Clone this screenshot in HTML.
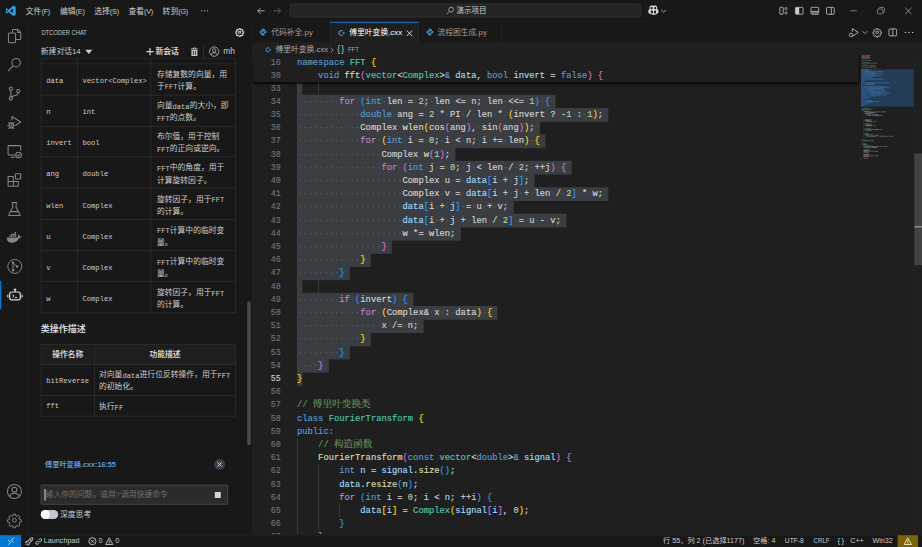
<!DOCTYPE html>
<html lang="zh-CN">
<head>
<meta charset="utf-8">
<title>傅里叶变换.cxx - 演示项目 - Visual Studio Code</title>
<style>
html,body{margin:0;padding:0;background:#181818;overflow:hidden;}
body{width:922px;height:547px;position:relative;}
#app{position:absolute;left:0;top:0;width:1537px;height:912px;transform:scale(0.6);transform-origin:0 0;background:#181818;overflow:hidden;
 font-family:"Liberation Sans","Noto Sans CJK SC",sans-serif;font-size:13px;color:#cccccc;}
#app *{box-sizing:border-box;}
.abs{position:absolute;}
.p{font-size:12px;letter-spacing:-.3px;}
svg{display:block;overflow:visible;}
/* title bar */
#title{position:absolute;left:0;top:0;width:1537px;height:36px;background:#181818;border-bottom:1px solid #2b2b2b;}
.menu{position:absolute;top:1px;height:36px;line-height:36px;font-size:13px;color:#cccccc;white-space:nowrap;}
#cmd{position:absolute;left:483px;top:6px;width:586px;height:23px;border:1px solid #3c3c3c;border-radius:6px;background:#252526;}
/* activity bar */
#act{position:absolute;left:0;top:36px;width:48px;height:855px;background:#181818;border-right:1px solid #2b2b2b;}
.ai{position:absolute;left:10px;width:28px;height:28px;margin-top:-2px;}
/* sidebar */
#side{position:absolute;left:48px;top:36px;width:373px;height:855px;background:#181818;border-right:1px solid #2b2b2b;overflow:hidden;}
.mono{font-family:"Liberation Mono","Noto Sans CJK SC",monospace;}
table.t{position:absolute;border-collapse:collapse;font-family:"Liberation Mono","Noto Sans CJK SC",monospace;font-size:13px;color:#cccccc;table-layout:fixed;}
.m{font-size:11.9px;position:relative;top:1.1px;}
table.t td.l{padding-top:3.5px;}
#t1 td{padding-top:6.5px;}
#t1 td.l{padding-top:4.6px;}
table.t td.w{padding-left:9.5px;}
#t2 td.w{padding-right:2px;}
#t2 td{padding-top:4.5px;padding-left:7px;}
#t2 td.l{padding-top:.7px;padding-left:8px;}
#t2 tr:last-child td.l{padding-top:0;padding-bottom:.9px;}
#t2 th{background:#1e1e1e;}
table.t td,table.t th{border:1px solid #363636;padding:7px 8px 0 8px;vertical-align:middle;line-height:19.5px;text-align:left;font-weight:normal;overflow:hidden;white-space:nowrap;}
table.t td.w{white-space:normal;}
table.t th{font-weight:bold;text-align:center;color:#d0d0d0;padding:2.4px 8px 0 8px;}
/* editor */
#ed{position:absolute;left:421px;top:36px;width:1116px;height:855px;background:#1f1f1f;overflow:hidden;}
#tabs{position:absolute;left:0;top:0;width:1116px;height:36px;background:#181818;border-bottom:1px solid #2b2b2b;}
.tab{position:absolute;top:0;height:36px;border-right:1px solid #2b2b2b;font-size:13px;line-height:35px;color:#9d9d9d;white-space:nowrap;}
.tab.on{background:#1f1f1f;border-top:2px solid #0078d4;color:#ffffff;height:36px;line-height:33px;}
#bc{position:absolute;left:0;top:36px;width:1116px;height:21px;font-size:13px;line-height:21px;color:#a9a9a9;white-space:nowrap;}
#code{position:absolute;left:0;top:0;width:1116px;height:855px;font-family:"Liberation Mono","Noto Serif CJK SC",monospace;font-size:14.667px;}
.ln{-webkit-text-stroke:.2px;position:absolute;left:0;width:47px;transform:scaleX(.95);transform-origin:100% 50%;text-align:right;height:22px;line-height:22px;color:#6e7681;white-space:pre;}
.ln.act{color:#cccccc;}
.cl{position:absolute;left:74px;height:22px;line-height:22px;white-space:pre;color:#d4d4d4;-webkit-text-stroke:.25px;}
.cl i{font-style:normal;color:#5e6165;-webkit-text-stroke:0;}
.cl b{font-weight:normal;font-size:16px;}
.sel{position:absolute;left:74px;height:22.7px;background:#3a3d41;}
.g{position:absolute;width:1px;background:#484848;z-index:2;}
#sticky{position:absolute;left:0;top:57px;width:1010px;height:44px;background:#1f1f1f;box-shadow:0 3px 4px 0 #000000;}
/* status */
#status{position:absolute;left:0;top:891px;width:1537px;height:22px;background:#181818;border-top:1px solid #2b2b2b;font-size:12px;line-height:19px;color:#cccccc;white-space:nowrap;}
.si{position:absolute;top:0;height:21px;}
</style>
</head>
<body>
<div id="app">

<!-- ================= TITLE BAR ================= -->
<div id="title">
  <svg class="abs" style="left:9px;top:9px" width="18" height="18" viewBox="0 0 100 100"><path fill="#23a9f2" d="M71 3 31 40 13 26 5 30v40l8 4 18-14 40 37 24-10V13zM14 62V38l12 12zm57 10L40 50l31-22z"/></svg>
  <div class="menu" style="left:43px">文件<span class="p">(F)</span></div>
  <div class="menu" style="left:100px">编辑<span class="p">(E)</span></div>
  <div class="menu" style="left:157px">选择<span class="p">(S)</span></div>
  <div class="menu" style="left:214px">查看<span class="p">(V)</span></div>
  <div class="menu" style="left:271px">转到<span class="p">(G)</span></div>
  <svg class="abs" style="left:334px;top:16px" width="14" height="4" viewBox="0 0 14 4"><g fill="#cccccc"><circle cx="2" cy="2" r="1.100"/><circle cx="7" cy="2" r="1.100"/><circle cx="12" cy="2" r="1.100"/></g></svg>
  <!-- nav arrows -->
  <svg class="abs" style="left:427px;top:10px" width="16" height="16" viewBox="0 0 16 16"><path fill="none" stroke="#cccccc" stroke-width="1.3" d="M7.5 3 2.5 8l5 5M2.5 8H14"/></svg>
  <svg class="abs" style="left:454px;top:10px" width="16" height="16" viewBox="0 0 16 16"><path fill="none" stroke="#6b6b6b" stroke-width="1.3" d="M8.5 3l5 5-5 5M13.5 8H2"/></svg>
  <div id="cmd">
    <svg class="abs" style="left:259px;top:3px" width="15" height="15" viewBox="0 0 16 16"><circle cx="9.5" cy="6.5" r="4.3" fill="none" stroke="#cccccc" stroke-width="1.2"/><path d="M6.4 9.6 2 14" stroke="#cccccc" stroke-width="1.2"/></svg>
    <div class="abs" style="left:277px;top:0;line-height:21px;font-size:12.5px;color:#cccccc;white-space:nowrap">演示项目</div>
  </div>
  <!-- copilot -->
  <svg class="abs" style="left:1080px;top:9.400px" width="18" height="16.500" viewBox="0 0 18 16.500"><path fill="#d8d8d8" d="M9 .9C7.500-.2 3-.1 2.600 3.200c-.2 1.300 0 2.300-.4 3.100C1 7.500.3 8.600.3 10.300.3 13.500 5 16 9 16s8.700-2.500 8.700-5.700c0-1.700-.7-2.800-1.900-4-.4-.8-.2-1.800-.4-3.100C15-.1 10.500-.2 9 .9z"/><g fill="#181818"><rect x="4.100" y="2.500" width="3.700" height="3.900" rx="1.700"/><rect x="10.200" y="2.500" width="3.700" height="3.900" rx="1.700"/><rect x="4.700" y="8.500" width="3.300" height="4.900" rx="1.200"/><rect x="10" y="8.500" width="3.300" height="4.900" rx="1.200"/></g></svg>
  <svg class="abs" style="left:1101px;top:14.500px" width="10" height="7" viewBox="0 0 10 7"><path d="M.8 1.200 5 5.200l4.200-4" fill="none" stroke="#cccccc" stroke-width="1.300"/></svg>
  <!-- layout controls -->
  <svg class="abs" style="left:1298px;top:10px" width="16" height="16" viewBox="0 0 16 16"><g fill="none" stroke="#cccccc"><rect x="1.700" y="2.200" width="5.600" height="11.600" rx="1" stroke-width="1.300"/><rect x="10.300" y="2.700" width="3.400" height="3.400" rx=".8" stroke-width="1.100"/><rect x="10.300" y="9.900" width="3.400" height="3.400" rx=".8" stroke-width="1.100"/></g></svg>
  <svg class="abs" style="left:1324px;top:10px" width="16" height="16" viewBox="0 0 16 16"><rect x="1.600" y="2.200" width="12.800" height="11.600" rx="1.500" fill="none" stroke="#cccccc" stroke-width="1.300"/><rect x="2" y="2.600" width="6" height="10.800" fill="#cccccc"/></svg>
  <svg class="abs" style="left:1350px;top:10px" width="16" height="16" viewBox="0 0 16 16"><rect x="1.600" y="2.200" width="12.800" height="11.600" rx="1.500" fill="none" stroke="#cccccc" stroke-width="1.300"/><rect x="2.200" y="9" width="11.600" height="4.200" fill="#6f6f6f"/><path d="M2 9h12" stroke="#cccccc" stroke-width="1.200"/></svg>
  <svg class="abs" style="left:1376px;top:10px" width="16" height="16" viewBox="0 0 16 16"><rect x="1.600" y="2.200" width="12.800" height="11.600" rx="1.500" fill="none" stroke="#cccccc" stroke-width="1.300"/><path d="M9.500 2.200v11.600" stroke="#cccccc" stroke-width="1.300"/></svg>
  <!-- window controls -->
  <svg class="abs" style="left:1417px;top:12px" width="12" height="12" viewBox="0 0 12 12"><path d="M0 6h11" stroke="#9a9a9a" stroke-width="1.200"/></svg>
  <svg class="abs" style="left:1462px;top:12px" width="13" height="12" viewBox="0 0 13 12"><g fill="none" stroke="#9a9a9a" stroke-width="1.200"><rect x=".6" y="3" width="8.800" height="8" rx="1.500"/><path d="M3 3V2.100c0-.8.700-1.500 1.500-1.500h6c.8 0 1.500.7 1.500 1.500v5.400c0 .8-.7 1.500-1.500 1.500H9.600"/></g></svg>
  <svg class="abs" style="left:1508px;top:12px" width="12" height="12" viewBox="0 0 12 12"><path d="M.8.800l10.400 10.400M11.200.800 .8 11.200" stroke="#c4c4c4" stroke-width="1.100"/></svg>
</div>

<!-- ================= ACTIVITY BAR ================= -->
<div id="act">
  <!-- files -->
  <svg class="ai" style="top:12px" viewBox="0 0 24 24"><g fill="none" stroke="#868686" stroke-width="1.500" stroke-linejoin="round"><path d="M9.200 7.300V4c0-.8.600-1.400 1.400-1.400h6.200L21 6.800v8.800c0 .8-.6 1.400-1.400 1.400h-5.400"/><path d="M16.600 2.800v4.200h4.200"/><rect x="3.500" y="7.600" width="10.200" height="14" rx="1.600"/></g></svg>
  <!-- search -->
  <svg class="ai" style="top:60px" viewBox="0 0 24 24"><g fill="none" stroke="#868686" stroke-width="1.500"><circle cx="14.500" cy="9" r="6"/><path d="M10.300 13.300 3 21"/></g></svg>
  <!-- scm -->
  <svg class="ai" style="top:108px" viewBox="0 0 24 24"><g fill="none" stroke="#868686" stroke-width="1.500"><circle cx="7" cy="5" r="2.300"/><circle cx="7" cy="19" r="2.300"/><circle cx="17.500" cy="8.500" r="2.300"/><path d="M7 7.300v9.400M17.500 10.800c0 3.500-4 4.200-7 4.700-2 .4-3.500 1-3.500 2"/></g></svg>
  <!-- debug -->
  <svg class="ai" style="top:156px" viewBox="0 0 24 24"><g fill="none" stroke="#868686" stroke-width="1.500" stroke-linejoin="round"><path d="M8.500 9V3.500L21 11.500 13.500 16.500"/><ellipse cx="7.500" cy="16.500" rx="3" ry="3.800"/><path d="M5 13.500 3 12M10 13.500l2-1.500M4.500 16.500H2M13 16.500h-2.500M5 19.500l-2 1.500M10 19.500l2 1.500M7.500 12.700V20"/></g></svg>
  <!-- remote -->
  <svg class="ai" style="top:204px" viewBox="0 0 24 24"><g fill="none" stroke="#868686" stroke-width="1.500"><path d="M13 17.500H4.200c-.7 0-1.200-.5-1.200-1.200V5.200C3 4.500 3.500 4 4.200 4h15.600c.7 0 1.200.5 1.200 1.200V11M7 20.500h6"/><circle cx="18" cy="17.500" r="4"/><path d="M16.300 17.500l1.200 1.300 2.200-2.500"/></g></svg>
  <!-- extensions -->
  <svg class="ai" style="top:252px" viewBox="0 0 24 24"><g fill="none" stroke="#868686" stroke-width="1.500" stroke-linejoin="round"><path d="M3 7h7.500v14H3zM3 14h14.500v7H3M10.500 14h7v7"/><rect x="13.500" y="3" width="7.500" height="7.500" rx=".8"/></g></svg>
  <!-- flask -->
  <svg class="ai" style="top:300px" viewBox="0 0 24 24"><g fill="none" stroke="#868686" stroke-width="1.500" stroke-linejoin="round"><path d="M8 3h8M9.500 3v7L4 20c-.4.800.1 1.500.9 1.500h14.200c.8 0 1.300-.7.900-1.500L14.500 10V3M6.500 16h11"/></g></svg>
  <!-- docker -->
  <svg class="ai" style="top:348px" viewBox="0 0 24 24"><path fill="#868686" d="M22.800 10.700c-.6-.4-1.900-.5-2.900-.3-.1-1-.7-1.900-1.600-2.600l-.4-.3-.3.400c-.6.900-.8 2.400-.1 3.400-.3.200-.9.400-1.700.4H1.400c-.3 1.700 0 4 1.300 5.500 1.200 1.400 3 2.100 5.400 2.100 5.100 0 8.900-2.400 10.700-6.700.7 0 2.200 0 3-1.500l.2-.4zM4.500 8.800h2.200v2H4.500zm2.600 0h2.200v2H7.100zm2.600 0h2.200v2H9.700zm2.600 0h2.200v2h-2.200zM7.100 6.400h2.200v2H7.100zm2.600 0h2.200v2H9.700zm2.600 0h2.200v2h-2.200zm0-2.400h2.200v2h-2.200z"/></svg>
  <!-- git graph -->
  <svg class="ai" style="top:396px" viewBox="0 0 24 24"><g fill="none" stroke="#868686" stroke-width="1.400"><circle cx="12.500" cy="12" r="10"/><path d="M10 7v10.500M10 7l5.500 5"/></g><g fill="#868686"><circle cx="10" cy="6.800" r="1.800"/><circle cx="10" cy="17.600" r="1.800"/><circle cx="15.800" cy="12.300" r="1.800"/></g></svg>
  <!-- active indicator -->
  <div class="abs" style="left:0;top:432px;width:2px;height:48px;background:#0078d4"></div>
  <!-- robot -->
  <svg class="ai" style="top:444px" viewBox="0 0 24 24"><g fill="none" stroke="#d7d7d7" stroke-width="1.700" stroke-linejoin="round"><rect x="5.200" y="7.400" width="15.300" height="11.200" rx="3"/><path d="M12.900 7.400V5M2.600 11.400v4M23 11.400v4"/><path d="M9.200 11.300l2.300 1.900-2.300 1.900M12.700 15.300h3.200" stroke-width="1.400"/></g><circle cx="12.900" cy="4" r="1.700" fill="#d7d7d7"/></svg>
  <!-- account -->
  <svg class="ai" style="top:771px" viewBox="0 0 24 24"><g fill="none" stroke="#868686" stroke-width="1.500"><circle cx="12" cy="12" r="10"/><circle cx="12" cy="9.500" r="3.500"/><path d="M5.200 19.200c.8-3.200 3.500-4.700 6.800-4.700s6 1.500 6.800 4.700"/></g></svg>
  <!-- gear -->
  <svg class="ai" style="top:819px" viewBox="-1 -1 26 26"><g fill="none" stroke="#868686" stroke-width="1.500" stroke-linejoin="round"><circle cx="12" cy="12" r="3"/><path d="M10.300 2.500h3.400l.5 2.700 1.800.8 2.300-1.600 2.400 2.400-1.600 2.300.8 1.800 2.700.5v3.400l-2.700.5-.8 1.800 1.600 2.300-2.400 2.400-2.300-1.600-1.800.8-.5 2.700h-3.400l-.5-2.700-1.800-.8-2.300 1.600-2.400-2.400 1.600-2.300-.8-1.800-2.700-.5v-3.400l2.700-.5.8-1.800-1.600-2.300 2.400-2.400 2.300 1.600 1.800-.8z"/></g></svg>

</div>

<!-- ================= SIDEBAR ================= -->
<div id="side"><div class="abs" style="left:0;top:-1px;width:372px;height:856px;">
  <div class="abs" style="left:20.500px;top:10px;font-size:11px;line-height:18px;color:#c4c4c4;white-space:nowrap;transform:scaleX(.875);transform-origin:0 0;">DTCODER CHAT</div>
  <!-- gear -->
  <svg class="abs" style="left:343.500px;top:10.500px" width="15" height="15" viewBox="0 0 24 24"><g fill="none" stroke="#cccccc" stroke-width="2.800" stroke-linejoin="round"><circle cx="12" cy="12" r="3"/><path d="M10.300 2.500h3.400l.5 2.700 1.800.8 2.300-1.600 2.400 2.400-1.600 2.300.8 1.800 2.700.5v3.400l-2.700.5-.8 1.800 1.600 2.300-2.400 2.400-2.300-1.600-1.800.8-.5 2.700h-3.400l-.5-2.700-1.800-.8-2.300 1.600-2.400-2.400 1.600-2.300-.8-1.800-2.700-.5v-3.400l2.700-.5.8-1.800-1.600-2.300 2.400-2.400 2.300 1.600 1.800-.8z"/></g></svg>
  <!-- chat header -->
  <div class="abs" id="dlg" style="left:20px;top:41px;font-size:13px;line-height:20px;color:#cccccc;white-space:nowrap;">新建对话14</div>
  <svg class="abs" style="left:94px;top:48px" width="12" height="7" viewBox="0 0 12 7"><path d="M0 0h12L6 7z" fill="#cccccc"/></svg>
  <svg class="abs" style="left:196px;top:45px" width="12" height="12" viewBox="0 0 12 12"><path d="M6 0v12M0 6h12" stroke="#d4d4d4" stroke-width="2"/></svg>
  <div class="abs" id="newc" style="left:211px;top:41px;font-size:13px;line-height:20px;color:#d4d4d4;font-weight:bold;white-space:nowrap;">新会话</div>
  <!-- trash -->
  <svg class="abs" style="left:269px;top:44px" width="14" height="15" viewBox="0 0 14 15"><path d="M1 2.700h12M5 2.500V1h4v1.500" fill="none" stroke="#cccccc" stroke-width="1.400"/><path d="M2 4.200h10v9.300c0 .6-.4 1-1 1H3c-.6 0-1-.4-1-1z" fill="#c4c4c4"/><path d="M5.300 6v6.500M8.700 6v6.500" stroke="#181818" stroke-width="1.300"/></svg>
  <div class="abs" style="left:291px;top:42px;width:1px;height:19px;background:#3c3c3c"></div>
  <!-- user -->
  <svg class="abs" style="left:300px;top:42px" width="18" height="18" viewBox="0 0 24 24"><g fill="none" stroke="#cccccc" stroke-width="1.600"><circle cx="12" cy="12" r="10.500"/><circle cx="12" cy="9.500" r="3.800"/><path d="M5 19.600c.8-3.400 3.600-5 7-5s6.200 1.600 7 5"/></g></svg>
  <div class="abs" id="mh" style="left:324px;top:40px;font-size:14px;line-height:20px;color:#cccccc;white-space:nowrap;">mh</div>
  <div class="abs" style="left:20px;top:62px;width:324px;height:1px;background:#2e2e2e"></div>

  <div class="abs" id="scr" style="left:0;top:63px;width:372px;height:650px;overflow:hidden;">
  <!-- table 1 -->
  <table class="t" id="t1" style="left:20px;top:-43.950px;width:324px;">
    <colgroup><col style="width:60.500px"><col style="width:122.500px"><col style="width:141px"></colgroup>
    <tr style="height:51.850px"><td></td><td></td><td></td></tr>
    <tr style="height:51.850px"><td class="l"><span class="m">data</span></td><td class="l"><span class="m">vector&lt;Complex&gt;</span></td><td class="w">存储复数的向量，用于<span class="m">FFT</span>计算。</td></tr>
    <tr style="height:51.850px"><td class="l"><span class="m">n</span></td><td class="l"><span class="m">int</span></td><td class="w">向量<span class="m">data</span>的大小，即<span class="m">FFT</span>的点数。</td></tr>
    <tr style="height:51.850px"><td class="l"><span class="m">invert</span></td><td class="l"><span class="m">bool</span></td><td class="w">布尔值，用于控制<span class="m">FFT</span>的正向或逆向。</td></tr>
    <tr style="height:51.850px"><td class="l"><span class="m">ang</span></td><td class="l"><span class="m">double</span></td><td class="w"><span class="m">FFT</span>中的角度，用于计算旋转因子。</td></tr>
    <tr style="height:51.850px"><td class="l"><span class="m">wlen</span></td><td class="l"><span class="m">Complex</span></td><td class="w">旋转因子，用于<span class="m">FFT</span>的计算。</td></tr>
    <tr style="height:51.850px"><td class="l"><span class="m">u</span></td><td class="l"><span class="m">Complex</span></td><td class="w"><span class="m">FFT</span>计算中的临时变量。</td></tr>
    <tr style="height:51.850px"><td class="l"><span class="m">v</span></td><td class="l"><span class="m">Complex</span></td><td class="w"><span class="m">FFT</span>计算中的临时变量。</td></tr>
    <tr style="height:51.850px"><td class="l"><span class="m">w</span></td><td class="l"><span class="m">Complex</span></td><td class="w">旋转因子，用于<span class="m">FFT</span>的计算。</td></tr>
  </table>
  

  <div class="abs" id="h2" style="left:20px;top:439px;font-size:15px;line-height:24px;font-weight:bold;color:#d4d4d4;white-space:nowrap;">类操作描述</div>

  <table class="t" id="t2" style="left:20px;top:476px;width:324px;">
    <colgroup><col style="width:89px"><col style="width:235px"></colgroup>
    <tr style="height:33px"><th>操作名称</th><th>功能描述</th></tr>
    <tr style="height:51.800px"><td class="l"><span class="m">bitReverse</span></td><td class="w">对向量<span class="m">data</span>进行位反转操作，用于<span class="m">FFT</span>的初始化。</td></tr>
    <tr style="height:34.500px"><td class="l"><span class="m">fft</span></td><td>执行<span class="m">FF</span></td></tr>
  </table>

  </div>
  <!-- scrollbar thumb -->
  <div class="abs" style="left:364px;top:467px;width:6px;height:240px;border-radius:3px;background:#4a4a4a"></div>

  <!-- context link -->
  <div class="abs" id="lnk" style="left:27px;top:729px;font-size:12px;line-height:20px;font-weight:bold;color:#5a9bd8;white-space:nowrap;">傅里叶变换.cxx:16:55</div>
  <svg class="abs" style="left:309px;top:730px" width="18" height="18" viewBox="0 0 18 18"><circle cx="9" cy="9" r="9" fill="#3b3f4a"/><path d="M5.500 5.500l7 7M12.500 5.500l-7 7" stroke="#e6e6e6" stroke-width="1.500"/></svg>

  <!-- input -->
  <div class="abs" style="left:20px;top:773px;width:312px;height:33px;border:1px solid #5c5c5c;background:#2b2b2b;border-radius:1px;">
    <div class="abs" style="left:5px;top:6px;width:2px;height:19px;background:#c8c8c8"></div>
    <div class="abs" id="ph" style="left:7px;top:5px;font-size:13px;line-height:20px;color:#6f6f6f;white-space:nowrap;">输入你的问题，或用'/'调用快捷命令</div>
    <div class="abs" style="left:289px;top:11px;width:9.5px;height:9.5px;background:#d4d4d4;border-radius:1px"></div>
  </div>
  <!-- toggle -->
  <div class="abs" style="left:20px;top:815px;width:29px;height:15px;border-radius:8px;background:#c4c6cc;">
    <div class="abs" style="left:0;top:0;width:15px;height:15px;border-radius:8px;background:#ffffff"></div>
  </div>
  <div class="abs" id="deep" style="left:52px;top:812px;font-size:13px;line-height:20px;color:#cccccc;white-space:nowrap;">深度思考</div>

</div></div>

<!-- ================= EDITOR ================= -->
<div id="ed">
  <div id="code">
<div class="g" style="left:74px;top:100px;height:484px"></div>
<div class="g" style="left:109.2px;top:100px;height:22px"></div>
<div class="g" style="left:109.2px;top:430px;height:22px"></div>
<div class="g" style="left:74px;top:694px;height:176px"></div>
<div class="g" style="left:109.2px;top:738px;height:110px"></div>
<div class="g" style="left:144.4px;top:804px;height:22px"></div>
<div class="ln" style="top:100px">33</div>
<div class="sel" style="top:100px;width:8.8px"></div>
<div class="cl" style="top:100px"></div>
<div class="ln" style="top:122px">34</div>
<div class="sel" style="top:122px;width:431.2px"></div>
<div class="cl" style="top:122px"><i>·</i><i>·</i><i>·</i><i>·</i><i>·</i><i>·</i><i>·</i><i>·</i><span style="color:#c586c0">for</span><i>·</i><span style="color:#179fff">(</span><span style="color:#569cd6">int</span><i>·</i><span style="color:#d4d4d4">len</span><i>·</i><span style="color:#d4d4d4">=</span><i>·</i><span style="color:#b5cea8">2</span><span style="color:#d4d4d4">;</span><i>·</i><span style="color:#d4d4d4">len</span><i>·</i><span style="color:#d4d4d4">&lt;=</span><i>·</i><span style="color:#d4d4d4">n;</span><i>·</i><span style="color:#d4d4d4">len</span><i>·</i><span style="color:#d4d4d4">&lt;&lt;=</span><i>·</i><span style="color:#b5cea8">1</span><span style="color:#179fff">)</span><i>·</i><span style="color:#179fff">{</span></div>
<div class="ln" style="top:144px">35</div>
<div class="sel" style="top:144px;width:519.2px"></div>
<div class="cl" style="top:144px"><i>·</i><i>·</i><i>·</i><i>·</i><i>·</i><i>·</i><i>·</i><i>·</i><i>·</i><i>·</i><i>·</i><i>·</i><span style="color:#569cd6">double</span><i>·</i><span style="color:#d4d4d4">ang</span><i>·</i><span style="color:#d4d4d4">=</span><i>·</i><span style="color:#b5cea8">2</span><i>·</i><span style="color:#d4d4d4">*</span><i>·</i><span style="color:#d4d4d4">PI</span><i>·</i><span style="color:#d4d4d4">/</span><i>·</i><span style="color:#d4d4d4">len</span><i>·</i><span style="color:#d4d4d4">*</span><i>·</i><span style="color:#ffd700">(</span><span style="color:#d4d4d4">invert</span><i>·</i><span style="color:#d4d4d4">?</span><i>·</i><span style="color:#d4d4d4">-</span><span style="color:#b5cea8">1</span><i>·</i><span style="color:#d4d4d4">:</span><i>·</i><span style="color:#b5cea8">1</span><span style="color:#ffd700">)</span><span style="color:#d4d4d4">;</span></div>
<div class="ln" style="top:166px">36</div>
<div class="sel" style="top:166px;width:404.8px"></div>
<div class="cl" style="top:166px"><i>·</i><i>·</i><i>·</i><i>·</i><i>·</i><i>·</i><i>·</i><i>·</i><i>·</i><i>·</i><i>·</i><i>·</i><span style="color:#d4d4d4">Complex</span><i>·</i><span style="color:#dcdcaa">wlen</span><span style="color:#ffd700">(</span><span style="color:#dcdcaa">cos</span><span style="color:#da70d6">(</span><span style="color:#d4d4d4">ang</span><span style="color:#da70d6">)</span><span style="color:#d4d4d4">,</span><i>·</i><span style="color:#dcdcaa">sin</span><span style="color:#da70d6">(</span><span style="color:#d4d4d4">ang</span><span style="color:#da70d6">)</span><span style="color:#ffd700">)</span><span style="color:#d4d4d4">;</span></div>
<div class="ln" style="top:188px">37</div>
<div class="sel" style="top:188px;width:413.6px"></div>
<div class="cl" style="top:188px"><i>·</i><i>·</i><i>·</i><i>·</i><i>·</i><i>·</i><i>·</i><i>·</i><i>·</i><i>·</i><i>·</i><i>·</i><span style="color:#c586c0">for</span><i>·</i><span style="color:#ffd700">(</span><span style="color:#569cd6">int</span><i>·</i><span style="color:#d4d4d4">i</span><i>·</i><span style="color:#d4d4d4">=</span><i>·</i><span style="color:#b5cea8">0</span><span style="color:#d4d4d4">;</span><i>·</i><span style="color:#d4d4d4">i</span><i>·</i><span style="color:#d4d4d4">&lt;</span><i>·</i><span style="color:#d4d4d4">n;</span><i>·</i><span style="color:#d4d4d4">i</span><i>·</i><span style="color:#d4d4d4">+=</span><i>·</i><span style="color:#d4d4d4">len</span><span style="color:#ffd700">)</span><i>·</i><span style="color:#ffd700">{</span></div>
<div class="ln" style="top:210px">38</div>
<div class="sel" style="top:210px;width:264px"></div>
<div class="cl" style="top:210px"><i>·</i><i>·</i><i>·</i><i>·</i><i>·</i><i>·</i><i>·</i><i>·</i><i>·</i><i>·</i><i>·</i><i>·</i><i>·</i><i>·</i><i>·</i><i>·</i><span style="color:#d4d4d4">Complex</span><i>·</i><span style="color:#dcdcaa">w</span><span style="color:#da70d6">(</span><span style="color:#b5cea8">1</span><span style="color:#da70d6">)</span><span style="color:#d4d4d4">;</span></div>
<div class="ln" style="top:232px">39</div>
<div class="sel" style="top:232px;width:457.6px"></div>
<div class="cl" style="top:232px"><i>·</i><i>·</i><i>·</i><i>·</i><i>·</i><i>·</i><i>·</i><i>·</i><i>·</i><i>·</i><i>·</i><i>·</i><i>·</i><i>·</i><i>·</i><i>·</i><span style="color:#c586c0">for</span><i>·</i><span style="color:#da70d6">(</span><span style="color:#569cd6">int</span><i>·</i><span style="color:#d4d4d4">j</span><i>·</i><span style="color:#d4d4d4">=</span><i>·</i><span style="color:#b5cea8">0</span><span style="color:#d4d4d4">;</span><i>·</i><span style="color:#d4d4d4">j</span><i>·</i><span style="color:#d4d4d4">&lt;</span><i>·</i><span style="color:#d4d4d4">len</span><i>·</i><span style="color:#d4d4d4">/</span><i>·</i><span style="color:#b5cea8">2</span><span style="color:#d4d4d4">;</span><i>·</i><span style="color:#d4d4d4">++j</span><span style="color:#da70d6">)</span><i>·</i><span style="color:#da70d6">{</span></div>
<div class="ln" style="top:254px">40</div>
<div class="sel" style="top:254px;width:396px"></div>
<div class="cl" style="top:254px"><i>·</i><i>·</i><i>·</i><i>·</i><i>·</i><i>·</i><i>·</i><i>·</i><i>·</i><i>·</i><i>·</i><i>·</i><i>·</i><i>·</i><i>·</i><i>·</i><i>·</i><i>·</i><i>·</i><i>·</i><span style="color:#d4d4d4">Complex</span><i>·</i><span style="color:#d4d4d4">u</span><i>·</i><span style="color:#d4d4d4">=</span><i>·</i><span style="color:#9cdcfe">data</span><span style="color:#179fff">[</span><span style="color:#d4d4d4">i</span><i>·</i><span style="color:#d4d4d4">+</span><i>·</i><span style="color:#d4d4d4">j</span><span style="color:#179fff">]</span><span style="color:#d4d4d4">;</span></div>
<div class="ln" style="top:276px">41</div>
<div class="sel" style="top:276px;width:519.2px"></div>
<div class="cl" style="top:276px"><i>·</i><i>·</i><i>·</i><i>·</i><i>·</i><i>·</i><i>·</i><i>·</i><i>·</i><i>·</i><i>·</i><i>·</i><i>·</i><i>·</i><i>·</i><i>·</i><i>·</i><i>·</i><i>·</i><i>·</i><span style="color:#d4d4d4">Complex</span><i>·</i><span style="color:#d4d4d4">v</span><i>·</i><span style="color:#d4d4d4">=</span><i>·</i><span style="color:#9cdcfe">data</span><span style="color:#179fff">[</span><span style="color:#d4d4d4">i</span><i>·</i><span style="color:#d4d4d4">+</span><i>·</i><span style="color:#d4d4d4">j</span><i>·</i><span style="color:#d4d4d4">+</span><i>·</i><span style="color:#d4d4d4">len</span><i>·</i><span style="color:#d4d4d4">/</span><i>·</i><span style="color:#b5cea8">2</span><span style="color:#179fff">]</span><i>·</i><span style="color:#d4d4d4">*</span><i>·</i><span style="color:#d4d4d4">w;</span></div>
<div class="ln" style="top:298px">42</div>
<div class="sel" style="top:298px;width:360.8px"></div>
<div class="cl" style="top:298px"><i>·</i><i>·</i><i>·</i><i>·</i><i>·</i><i>·</i><i>·</i><i>·</i><i>·</i><i>·</i><i>·</i><i>·</i><i>·</i><i>·</i><i>·</i><i>·</i><i>·</i><i>·</i><i>·</i><i>·</i><span style="color:#9cdcfe">data</span><span style="color:#179fff">[</span><span style="color:#d4d4d4">i</span><i>·</i><span style="color:#d4d4d4">+</span><i>·</i><span style="color:#d4d4d4">j</span><span style="color:#179fff">]</span><i>·</i><span style="color:#d4d4d4">=</span><i>·</i><span style="color:#d4d4d4">u</span><i>·</i><span style="color:#d4d4d4">+</span><i>·</i><span style="color:#d4d4d4">v;</span></div>
<div class="ln" style="top:320px">43</div>
<div class="sel" style="top:320px;width:448.8px"></div>
<div class="cl" style="top:320px"><i>·</i><i>·</i><i>·</i><i>·</i><i>·</i><i>·</i><i>·</i><i>·</i><i>·</i><i>·</i><i>·</i><i>·</i><i>·</i><i>·</i><i>·</i><i>·</i><i>·</i><i>·</i><i>·</i><i>·</i><span style="color:#9cdcfe">data</span><span style="color:#179fff">[</span><span style="color:#d4d4d4">i</span><i>·</i><span style="color:#d4d4d4">+</span><i>·</i><span style="color:#d4d4d4">j</span><i>·</i><span style="color:#d4d4d4">+</span><i>·</i><span style="color:#d4d4d4">len</span><i>·</i><span style="color:#d4d4d4">/</span><i>·</i><span style="color:#b5cea8">2</span><span style="color:#179fff">]</span><i>·</i><span style="color:#d4d4d4">=</span><i>·</i><span style="color:#d4d4d4">u</span><i>·</i><span style="color:#d4d4d4">-</span><i>·</i><span style="color:#d4d4d4">v;</span></div>
<div class="ln" style="top:342px">44</div>
<div class="sel" style="top:342px;width:272.8px"></div>
<div class="cl" style="top:342px"><i>·</i><i>·</i><i>·</i><i>·</i><i>·</i><i>·</i><i>·</i><i>·</i><i>·</i><i>·</i><i>·</i><i>·</i><i>·</i><i>·</i><i>·</i><i>·</i><i>·</i><i>·</i><i>·</i><i>·</i><span style="color:#d4d4d4">w</span><i>·</i><span style="color:#d4d4d4">*=</span><i>·</i><span style="color:#d4d4d4">wlen;</span></div>
<div class="ln" style="top:364px">45</div>
<div class="sel" style="top:364px;width:158.4px"></div>
<div class="cl" style="top:364px"><i>·</i><i>·</i><i>·</i><i>·</i><i>·</i><i>·</i><i>·</i><i>·</i><i>·</i><i>·</i><i>·</i><i>·</i><i>·</i><i>·</i><i>·</i><i>·</i><span style="color:#da70d6">}</span></div>
<div class="ln" style="top:386px">46</div>
<div class="sel" style="top:386px;width:123.2px"></div>
<div class="cl" style="top:386px"><i>·</i><i>·</i><i>·</i><i>·</i><i>·</i><i>·</i><i>·</i><i>·</i><i>·</i><i>·</i><i>·</i><i>·</i><span style="color:#ffd700">}</span></div>
<div class="ln" style="top:408px">47</div>
<div class="sel" style="top:408px;width:88px"></div>
<div class="cl" style="top:408px"><i>·</i><i>·</i><i>·</i><i>·</i><i>·</i><i>·</i><i>·</i><i>·</i><span style="color:#179fff">}</span></div>
<div class="ln" style="top:430px">48</div>
<div class="sel" style="top:430px;width:8.8px"></div>
<div class="cl" style="top:430px"></div>
<div class="ln" style="top:452px">49</div>
<div class="sel" style="top:452px;width:193.6px"></div>
<div class="cl" style="top:452px"><i>·</i><i>·</i><i>·</i><i>·</i><i>·</i><i>·</i><i>·</i><i>·</i><span style="color:#c586c0">if</span><i>·</i><span style="color:#179fff">(</span><span style="color:#d4d4d4">invert</span><span style="color:#179fff">)</span><i>·</i><span style="color:#179fff">{</span></div>
<div class="ln" style="top:474px">50</div>
<div class="sel" style="top:474px;width:334.4px"></div>
<div class="cl" style="top:474px"><i>·</i><i>·</i><i>·</i><i>·</i><i>·</i><i>·</i><i>·</i><i>·</i><i>·</i><i>·</i><i>·</i><i>·</i><span style="color:#c586c0">for</span><i>·</i><span style="color:#ffd700">(</span><span style="color:#d4d4d4">Complex&amp;</span><i>·</i><span style="color:#d4d4d4">x</span><i>·</i><span style="color:#d4d4d4">:</span><i>·</i><span style="color:#d4d4d4">data</span><span style="color:#ffd700">)</span><i>·</i><span style="color:#ffd700">{</span></div>
<div class="ln" style="top:496px">51</div>
<div class="sel" style="top:496px;width:211.2px"></div>
<div class="cl" style="top:496px"><i>·</i><i>·</i><i>·</i><i>·</i><i>·</i><i>·</i><i>·</i><i>·</i><i>·</i><i>·</i><i>·</i><i>·</i><i>·</i><i>·</i><i>·</i><i>·</i><span style="color:#d4d4d4">x</span><i>·</i><span style="color:#d4d4d4">/=</span><i>·</i><span style="color:#d4d4d4">n;</span></div>
<div class="ln" style="top:518px">52</div>
<div class="sel" style="top:518px;width:123.2px"></div>
<div class="cl" style="top:518px"><i>·</i><i>·</i><i>·</i><i>·</i><i>·</i><i>·</i><i>·</i><i>·</i><i>·</i><i>·</i><i>·</i><i>·</i><span style="color:#ffd700">}</span></div>
<div class="ln" style="top:540px">53</div>
<div class="sel" style="top:540px;width:88px"></div>
<div class="cl" style="top:540px"><i>·</i><i>·</i><i>·</i><i>·</i><i>·</i><i>·</i><i>·</i><i>·</i><span style="color:#179fff">}</span></div>
<div class="ln" style="top:562px">54</div>
<div class="sel" style="top:562px;width:52.8px"></div>
<div class="cl" style="top:562px"><i>·</i><i>·</i><i>·</i><i>·</i><span style="color:#da70d6">}</span></div>
<div class="ln act" style="top:584px">55</div>
<div class="sel" style="top:584px;width:8.8px"></div>
<div class="cl" style="top:584px"><span style="color:#ffd700">}</span></div>
<div class="ln" style="top:606px">56</div>
<div class="cl" style="top:606px"></div>
<div class="ln" style="top:628px">57</div>
<div class="cl" style="top:628px"><span style="color:#6a9955">// <b>傅里叶变换类</b></span></div>
<div class="ln" style="top:650px">58</div>
<div class="cl" style="top:650px"><span style="color:#569cd6">class</span><span style="color:#d4d4d4"> </span><span style="color:#4ec9b0">FourierTransform</span><span style="color:#d4d4d4"> </span><span style="color:#ffd700">{</span></div>
<div class="ln" style="top:672px">59</div>
<div class="cl" style="top:672px"><span style="color:#569cd6">public:</span></div>
<div class="ln" style="top:694px">60</div>
<div class="cl" style="top:694px"><span style="color:#d4d4d4">    </span><span style="color:#6a9955">// <b>构造函数</b></span></div>
<div class="ln" style="top:716px">61</div>
<div class="cl" style="top:716px"><span style="color:#d4d4d4">    </span><span style="color:#dcdcaa">FourierTransform</span><span style="color:#da70d6">(</span><span style="color:#569cd6">const</span><span style="color:#d4d4d4"> </span><span style="color:#4ec9b0">vector</span><span style="color:#d4d4d4">&lt;</span><span style="color:#569cd6">double</span><span style="color:#d4d4d4">&gt;</span><span style="color:#569cd6">&amp;</span><span style="color:#d4d4d4"> </span><span style="color:#9cdcfe">signal</span><span style="color:#da70d6">)</span><span style="color:#d4d4d4"> </span><span style="color:#da70d6">{</span></div>
<div class="ln" style="top:738px">62</div>
<div class="cl" style="top:738px"><span style="color:#d4d4d4">        </span><span style="color:#569cd6">int</span><span style="color:#d4d4d4"> </span><span style="color:#9cdcfe">n</span><span style="color:#d4d4d4"> = </span><span style="color:#9cdcfe">signal</span><span style="color:#d4d4d4">.</span><span style="color:#dcdcaa">size</span><span style="color:#179fff">(</span><span style="color:#179fff">)</span><span style="color:#d4d4d4">;</span></div>
<div class="ln" style="top:760px">63</div>
<div class="cl" style="top:760px"><span style="color:#d4d4d4">        </span><span style="color:#9cdcfe">data</span><span style="color:#d4d4d4">.</span><span style="color:#dcdcaa">resize</span><span style="color:#179fff">(</span><span style="color:#9cdcfe">n</span><span style="color:#179fff">)</span><span style="color:#d4d4d4">;</span></div>
<div class="ln" style="top:782px">64</div>
<div class="cl" style="top:782px"><span style="color:#d4d4d4">        </span><span style="color:#c586c0">for</span><span style="color:#d4d4d4"> </span><span style="color:#179fff">(</span><span style="color:#569cd6">int</span><span style="color:#d4d4d4"> </span><span style="color:#9cdcfe">i</span><span style="color:#d4d4d4"> = </span><span style="color:#b5cea8">0</span><span style="color:#d4d4d4">; </span><span style="color:#9cdcfe">i</span><span style="color:#d4d4d4"> &lt; </span><span style="color:#9cdcfe">n</span><span style="color:#d4d4d4">; ++</span><span style="color:#9cdcfe">i</span><span style="color:#179fff">)</span><span style="color:#d4d4d4"> </span><span style="color:#179fff">{</span></div>
<div class="ln" style="top:804px">65</div>
<div class="cl" style="top:804px"><span style="color:#d4d4d4">            </span><span style="color:#9cdcfe">data</span><span style="color:#ffd700">[</span><span style="color:#9cdcfe">i</span><span style="color:#ffd700">]</span><span style="color:#d4d4d4"> = </span><span style="color:#4ec9b0">Complex</span><span style="color:#ffd700">(</span><span style="color:#9cdcfe">signal</span><span style="color:#da70d6">[</span><span style="color:#9cdcfe">i</span><span style="color:#da70d6">]</span><span style="color:#d4d4d4">, </span><span style="color:#b5cea8">0</span><span style="color:#ffd700">)</span><span style="color:#d4d4d4">;</span></div>
<div class="ln" style="top:826px">66</div>
<div class="cl" style="top:826px"><span style="color:#d4d4d4">        </span><span style="color:#179fff">}</span></div>
<div class="ln" style="top:848px">67</div>
<div class="cl" style="top:848px"><span style="color:#d4d4d4">    </span><span style="color:#da70d6">}</span></div>
  </div>
  <div id="sticky"><div style="position:absolute;left:0;top:-57px;width:1116px;height:200px;font-family:'Liberation Mono','Noto Serif CJK SC',monospace;font-size:14.667px;">
<div class="ln" style="top:57px">16</div>
<div class="cl" style="top:57px"><span style="color:#569cd6">namespace</span><span style="color:#d4d4d4"> </span><span style="color:#4ec9b0">FFT</span><span style="color:#d4d4d4"> </span><span style="color:#ffd700">{</span></div>
<div class="ln" style="top:79px">30</div>
<div class="cl" style="top:79px"><span style="color:#d4d4d4">    </span><span style="color:#569cd6">void</span><span style="color:#d4d4d4"> </span><span style="color:#dcdcaa">fft</span><span style="color:#da70d6">(</span><span style="color:#4ec9b0">vector</span><span style="color:#d4d4d4">&lt;</span><span style="color:#4ec9b0">Complex</span><span style="color:#d4d4d4">&gt;</span><span style="color:#569cd6">&amp;</span><span style="color:#d4d4d4"> </span><span style="color:#9cdcfe">data</span><span style="color:#d4d4d4">, </span><span style="color:#569cd6">bool</span><span style="color:#d4d4d4"> </span><span style="color:#9cdcfe">invert</span><span style="color:#d4d4d4"> = </span><span style="color:#569cd6">false</span><span style="color:#da70d6">)</span><span style="color:#d4d4d4"> </span><span style="color:#da70d6">{</span></div>
  </div></div>
<svg class="abs" style="left:1014px;top:56.4px" width="89" height="800" viewBox="0 0 89 800" shape-rendering="auto">
<rect x="0" y="23.4" width="88" height="62.4" fill="#243c58"/>
<rect x="0" y="23.40" width="13.8" height="1.61" fill="#2b5785"/>
<rect x="0" y="24.96" width="11.4" height="1.61" fill="#2b5785"/>
<rect x="0" y="26.52" width="37.0" height="1.61" fill="#2b5785"/>
<rect x="0" y="28.08" width="24.2" height="1.61" fill="#2b5785"/>
<rect x="0" y="29.64" width="37.0" height="1.61" fill="#2b5785"/>
<rect x="0" y="31.20" width="25.0" height="1.61" fill="#2b5785"/>
<rect x="0" y="32.76" width="33.8" height="1.61" fill="#2b5785"/>
<rect x="0" y="34.32" width="21.8" height="1.61" fill="#2b5785"/>
<rect x="0" y="35.88" width="12.2" height="1.61" fill="#2b5785"/>
<rect x="0" y="37.44" width="18.6" height="1.61" fill="#2b5785"/>
<rect x="0" y="39.00" width="38.6" height="1.61" fill="#2b5785"/>
<rect x="0" y="40.56" width="9.0" height="1.61" fill="#2b5785"/>
<rect x="0" y="42.12" width="5.8" height="1.61" fill="#2b5785"/>
<rect x="0" y="43.68" width="1.8" height="1.61" fill="#2b5785"/>
<rect x="0" y="45.24" width="48.2" height="1.61" fill="#2b5785"/>
<rect x="0" y="46.80" width="24.2" height="1.61" fill="#2b5785"/>
<rect x="0" y="48.36" width="21.8" height="1.61" fill="#2b5785"/>
<rect x="0" y="49.92" width="1.8" height="1.61" fill="#2b5785"/>
<rect x="0" y="51.48" width="40.2" height="1.61" fill="#2b5785"/>
<rect x="0" y="53.04" width="48.2" height="1.61" fill="#2b5785"/>
<rect x="0" y="54.60" width="37.8" height="1.61" fill="#2b5785"/>
<rect x="0" y="56.16" width="38.6" height="1.61" fill="#2b5785"/>
<rect x="0" y="57.72" width="25.0" height="1.61" fill="#2b5785"/>
<rect x="0" y="59.28" width="42.6" height="1.61" fill="#2b5785"/>
<rect x="0" y="60.84" width="37.0" height="1.61" fill="#2b5785"/>
<rect x="0" y="62.40" width="48.2" height="1.61" fill="#2b5785"/>
<rect x="0" y="63.96" width="33.8" height="1.61" fill="#2b5785"/>
<rect x="0" y="65.52" width="41.8" height="1.61" fill="#2b5785"/>
<rect x="0" y="67.08" width="25.8" height="1.61" fill="#2b5785"/>
<rect x="0" y="68.64" width="15.4" height="1.61" fill="#2b5785"/>
<rect x="0" y="70.20" width="12.2" height="1.61" fill="#2b5785"/>
<rect x="0" y="71.76" width="9.0" height="1.61" fill="#2b5785"/>
<rect x="0" y="73.32" width="1.8" height="1.61" fill="#2b5785"/>
<rect x="0" y="74.88" width="18.6" height="1.61" fill="#2b5785"/>
<rect x="0" y="76.44" width="31.4" height="1.61" fill="#2b5785"/>
<rect x="0" y="78.00" width="20.2" height="1.61" fill="#2b5785"/>
<rect x="0" y="79.56" width="12.2" height="1.61" fill="#2b5785"/>
<rect x="0" y="81.12" width="9.0" height="1.61" fill="#2b5785"/>
<rect x="0" y="82.68" width="5.8" height="1.61" fill="#2b5785"/>
<rect x="0" y="84.24" width="1.8" height="1.61" fill="#2b5785"/>
<rect x="1.0" y="0.2" width="6.4" height="1.1" fill="#855e82"/>
<rect x="8.2" y="0.2" width="8.0" height="1.1" fill="#8b6556"/>
<rect x="1.0" y="1.8" width="6.4" height="1.1" fill="#855e82"/>
<rect x="8.2" y="1.8" width="6.4" height="1.1" fill="#8b6556"/>
<rect x="1.0" y="3.4" width="6.4" height="1.1" fill="#855e82"/>
<rect x="8.2" y="3.4" width="7.2" height="1.1" fill="#8b6556"/>
<rect x="1.0" y="4.9" width="6.4" height="1.1" fill="#855e82"/>
<rect x="8.2" y="4.9" width="5.6" height="1.1" fill="#8b6556"/>
<rect x="1.0" y="8.1" width="4.0" height="1.1" fill="#416c90"/>
<rect x="5.8" y="8.1" width="7.2" height="1.1" fill="#416c90"/>
<rect x="13.8" y="8.1" width="3.2" height="1.1" fill="#8f8f8f"/>
<rect x="1.0" y="11.2" width="1.6" height="1.1" fill="#4d6a40"/>
<rect x="3.4" y="11.2" width="9.6" height="1.1" fill="#4d6a40"/>
<rect x="1.0" y="12.7" width="5.6" height="1.1" fill="#416c90"/>
<rect x="7.4" y="12.7" width="5.6" height="1.1" fill="#3c8878"/>
<rect x="13.0" y="12.7" width="0.8" height="1.1" fill="#8f8f8f"/>
<rect x="13.8" y="12.7" width="4.8" height="1.1" fill="#416c90"/>
<rect x="18.6" y="12.7" width="0.8" height="1.1" fill="#8f8f8f"/>
<rect x="20.2" y="12.7" width="5.6" height="1.1" fill="#3c8878"/>
<rect x="25.8" y="12.7" width="0.8" height="1.1" fill="#8f8f8f"/>
<rect x="1.0" y="15.9" width="1.6" height="1.1" fill="#4d6a40"/>
<rect x="3.4" y="15.9" width="6.4" height="1.1" fill="#4d6a40"/>
<rect x="7.4" y="15.9" width="1.6" height="1.1" fill="#4d6a40"/>
<rect x="1.0" y="17.4" width="4.0" height="1.1" fill="#416c90"/>
<rect x="5.8" y="17.4" width="4.8" height="1.1" fill="#416c90"/>
<rect x="11.4" y="17.4" width="1.6" height="1.1" fill="#8f8f8f"/>
<rect x="13.8" y="17.4" width="0.8" height="1.1" fill="#8f8f8f"/>
<rect x="15.4" y="17.4" width="3.2" height="1.1" fill="#949475"/>
<rect x="18.6" y="17.4" width="1.6" height="1.1" fill="#8f8f8f"/>
<rect x="20.2" y="17.4" width="2.4" height="1.1" fill="#7c8b73"/>
<rect x="22.6" y="17.4" width="1.6" height="1.1" fill="#8f8f8f"/>
<rect x="1.0" y="20.5" width="1.6" height="1.1" fill="#4d6a40"/>
<rect x="3.4" y="20.5" width="11.2" height="1.1" fill="#4d6a40"/>
<rect x="14.6" y="20.5" width="4.0" height="1.1" fill="#4d6a40"/>
<rect x="19.4" y="20.5" width="6.4" height="1.1" fill="#4d6a40"/>
<rect x="1.0" y="23.7" width="7.2" height="1.1" fill="#305f8e"/>
<rect x="9.0" y="23.7" width="2.4" height="1.1" fill="#2f648a"/>
<rect x="12.2" y="23.7" width="0.8" height="1.1" fill="#446675"/>
<rect x="4.2" y="25.2" width="1.6" height="1.1" fill="#325e7f"/>
<rect x="6.6" y="25.2" width="8.0" height="1.1" fill="#325e7f"/>
<rect x="4.2" y="26.8" width="3.2" height="1.1" fill="#305f8e"/>
<rect x="8.2" y="26.8" width="8.0" height="1.1" fill="#406689"/>
<rect x="16.2" y="26.8" width="0.8" height="1.1" fill="#3f668e"/>
<rect x="17.0" y="26.8" width="4.8" height="1.1" fill="#2f648a"/>
<rect x="21.8" y="26.8" width="0.8" height="1.1" fill="#3f668e"/>
<rect x="22.6" y="26.8" width="5.6" height="1.1" fill="#2f648a"/>
<rect x="28.2" y="26.8" width="1.6" height="1.1" fill="#3f668e"/>
<rect x="30.6" y="26.8" width="4.0" height="1.1" fill="#3f668e"/>
<rect x="35.4" y="26.8" width="0.8" height="1.1" fill="#3f668e"/>
<rect x="7.4" y="28.3" width="2.4" height="1.1" fill="#305f8e"/>
<rect x="10.6" y="28.3" width="0.8" height="1.1" fill="#3f668e"/>
<rect x="12.2" y="28.3" width="0.8" height="1.1" fill="#3f668e"/>
<rect x="13.8" y="28.3" width="4.0" height="1.1" fill="#3f668e"/>
<rect x="17.8" y="28.3" width="3.2" height="1.1" fill="#406689"/>
<rect x="21.0" y="28.3" width="2.4" height="1.1" fill="#3f668e"/>
<rect x="7.4" y="29.9" width="2.4" height="1.1" fill="#3d5c8c"/>
<rect x="10.6" y="29.9" width="0.8" height="1.1" fill="#3f668e"/>
<rect x="11.4" y="29.9" width="2.4" height="1.1" fill="#305f8e"/>
<rect x="14.6" y="29.9" width="0.8" height="1.1" fill="#3f668e"/>
<rect x="16.2" y="29.9" width="0.8" height="1.1" fill="#3f668e"/>
<rect x="17.8" y="29.9" width="1.6" height="1.1" fill="#3f668e"/>
<rect x="20.2" y="29.9" width="0.8" height="1.1" fill="#3f668e"/>
<rect x="21.8" y="29.9" width="0.8" height="1.1" fill="#3f668e"/>
<rect x="23.4" y="29.9" width="1.6" height="1.1" fill="#3f668e"/>
<rect x="25.8" y="29.9" width="0.8" height="1.1" fill="#3f668e"/>
<rect x="27.4" y="29.9" width="0.8" height="1.1" fill="#3f668e"/>
<rect x="29.0" y="29.9" width="1.6" height="1.1" fill="#3f668e"/>
<rect x="31.4" y="29.9" width="3.2" height="1.1" fill="#3f668e"/>
<rect x="35.4" y="29.9" width="0.8" height="1.1" fill="#3f668e"/>
<rect x="10.6" y="31.5" width="2.4" height="1.1" fill="#305f8e"/>
<rect x="13.8" y="31.5" width="2.4" height="1.1" fill="#3f668e"/>
<rect x="17.0" y="31.5" width="0.8" height="1.1" fill="#3f668e"/>
<rect x="18.6" y="31.5" width="0.8" height="1.1" fill="#3f668e"/>
<rect x="20.2" y="31.5" width="1.6" height="1.1" fill="#3f668e"/>
<rect x="22.6" y="31.5" width="1.6" height="1.1" fill="#3f668e"/>
<rect x="10.6" y="33.0" width="2.4" height="1.1" fill="#3d5c8c"/>
<rect x="13.8" y="33.0" width="1.6" height="1.1" fill="#3f668e"/>
<rect x="16.2" y="33.0" width="0.8" height="1.1" fill="#3f668e"/>
<rect x="17.8" y="33.0" width="0.8" height="1.1" fill="#3f668e"/>
<rect x="19.4" y="33.0" width="3.2" height="1.1" fill="#3f668e"/>
<rect x="23.4" y="33.0" width="2.4" height="1.1" fill="#3f668e"/>
<rect x="26.6" y="33.0" width="2.4" height="1.1" fill="#3f668e"/>
<rect x="29.8" y="33.0" width="1.6" height="1.1" fill="#3f668e"/>
<rect x="32.2" y="33.0" width="0.8" height="1.1" fill="#3f668e"/>
<rect x="13.8" y="34.6" width="0.8" height="1.1" fill="#3f668e"/>
<rect x="15.4" y="34.6" width="1.6" height="1.1" fill="#3f668e"/>
<rect x="17.8" y="34.6" width="3.2" height="1.1" fill="#3f668e"/>
<rect x="10.6" y="36.1" width="0.8" height="1.1" fill="#3f668e"/>
<rect x="10.6" y="37.7" width="0.8" height="1.1" fill="#3f668e"/>
<rect x="12.2" y="37.7" width="1.6" height="1.1" fill="#3f668e"/>
<rect x="14.6" y="37.7" width="3.2" height="1.1" fill="#3f668e"/>
<rect x="10.6" y="39.2" width="1.6" height="1.1" fill="#3d5c8c"/>
<rect x="13.0" y="39.2" width="1.6" height="1.1" fill="#3f668e"/>
<rect x="15.4" y="39.2" width="0.8" height="1.1" fill="#3f668e"/>
<rect x="17.0" y="39.2" width="1.6" height="1.1" fill="#3f668e"/>
<rect x="19.4" y="39.2" width="3.2" height="1.1" fill="#406689"/>
<rect x="22.6" y="39.2" width="7.2" height="1.1" fill="#3f668e"/>
<rect x="30.6" y="39.2" width="7.2" height="1.1" fill="#3f668e"/>
<rect x="7.4" y="40.8" width="0.8" height="1.1" fill="#3f668e"/>
<rect x="4.2" y="42.4" width="0.8" height="1.1" fill="#3f668e"/>
<rect x="4.2" y="45.5" width="3.2" height="1.1" fill="#305f8e"/>
<rect x="8.2" y="45.5" width="2.4" height="1.1" fill="#406689"/>
<rect x="10.6" y="45.5" width="0.8" height="1.1" fill="#405a8e"/>
<rect x="11.4" y="45.5" width="4.8" height="1.1" fill="#2f648a"/>
<rect x="16.2" y="45.5" width="0.8" height="1.1" fill="#3f668e"/>
<rect x="17.0" y="45.5" width="5.6" height="1.1" fill="#2f648a"/>
<rect x="22.6" y="45.5" width="0.8" height="1.1" fill="#3f668e"/>
<rect x="23.4" y="45.5" width="0.8" height="1.1" fill="#305f8e"/>
<rect x="25.0" y="45.5" width="3.2" height="1.1" fill="#386693"/>
<rect x="28.2" y="45.5" width="0.8" height="1.1" fill="#3f668e"/>
<rect x="29.8" y="45.5" width="3.2" height="1.1" fill="#305f8e"/>
<rect x="33.8" y="45.5" width="4.8" height="1.1" fill="#386693"/>
<rect x="39.4" y="45.5" width="0.8" height="1.1" fill="#3f668e"/>
<rect x="41.0" y="45.5" width="4.0" height="1.1" fill="#305f8e"/>
<rect x="45.0" y="45.5" width="0.8" height="1.1" fill="#405a8e"/>
<rect x="46.6" y="45.5" width="0.8" height="1.1" fill="#405a8e"/>
<rect x="7.4" y="47.1" width="2.4" height="1.1" fill="#305f8e"/>
<rect x="10.6" y="47.1" width="0.8" height="1.1" fill="#3f668e"/>
<rect x="12.2" y="47.1" width="0.8" height="1.1" fill="#3f668e"/>
<rect x="13.8" y="47.1" width="4.0" height="1.1" fill="#3f668e"/>
<rect x="17.8" y="47.1" width="3.2" height="1.1" fill="#406689"/>
<rect x="21.0" y="47.1" width="2.4" height="1.1" fill="#3f668e"/>
<rect x="7.4" y="48.6" width="8.0" height="1.1" fill="#406689"/>
<rect x="15.4" y="48.6" width="5.6" height="1.1" fill="#3f668e"/>
<rect x="7.4" y="51.7" width="2.4" height="1.1" fill="#3d5c8c"/>
<rect x="10.6" y="51.7" width="0.8" height="1.1" fill="#285f93"/>
<rect x="11.4" y="51.7" width="2.4" height="1.1" fill="#305f8e"/>
<rect x="14.6" y="51.7" width="2.4" height="1.1" fill="#3f668e"/>
<rect x="17.8" y="51.7" width="0.8" height="1.1" fill="#3f668e"/>
<rect x="19.4" y="51.7" width="0.8" height="1.1" fill="#3b6589"/>
<rect x="20.2" y="51.7" width="0.8" height="1.1" fill="#3f668e"/>
<rect x="21.8" y="51.7" width="2.4" height="1.1" fill="#3f668e"/>
<rect x="25.0" y="51.7" width="1.6" height="1.1" fill="#3f668e"/>
<rect x="27.4" y="51.7" width="1.6" height="1.1" fill="#3f668e"/>
<rect x="29.8" y="51.7" width="2.4" height="1.1" fill="#3f668e"/>
<rect x="33.0" y="51.7" width="2.4" height="1.1" fill="#3f668e"/>
<rect x="36.2" y="51.7" width="0.8" height="1.1" fill="#3b6589"/>
<rect x="37.0" y="51.7" width="0.8" height="1.1" fill="#285f93"/>
<rect x="38.6" y="51.7" width="0.8" height="1.1" fill="#285f93"/>
<rect x="10.6" y="53.3" width="4.8" height="1.1" fill="#305f8e"/>
<rect x="16.2" y="53.3" width="2.4" height="1.1" fill="#3f668e"/>
<rect x="19.4" y="53.3" width="0.8" height="1.1" fill="#3f668e"/>
<rect x="21.0" y="53.3" width="0.8" height="1.1" fill="#3b6589"/>
<rect x="22.6" y="53.3" width="0.8" height="1.1" fill="#3f668e"/>
<rect x="24.2" y="53.3" width="1.6" height="1.1" fill="#3f668e"/>
<rect x="26.6" y="53.3" width="0.8" height="1.1" fill="#3f668e"/>
<rect x="28.2" y="53.3" width="2.4" height="1.1" fill="#3f668e"/>
<rect x="31.4" y="53.3" width="0.8" height="1.1" fill="#3f668e"/>
<rect x="33.0" y="53.3" width="0.8" height="1.1" fill="#446675"/>
<rect x="33.8" y="53.3" width="4.8" height="1.1" fill="#3f668e"/>
<rect x="39.4" y="53.3" width="0.8" height="1.1" fill="#3f668e"/>
<rect x="41.0" y="53.3" width="0.8" height="1.1" fill="#3f668e"/>
<rect x="41.8" y="53.3" width="0.8" height="1.1" fill="#3b6589"/>
<rect x="43.4" y="53.3" width="0.8" height="1.1" fill="#3f668e"/>
<rect x="45.0" y="53.3" width="0.8" height="1.1" fill="#3b6589"/>
<rect x="45.8" y="53.3" width="0.8" height="1.1" fill="#446675"/>
<rect x="46.6" y="53.3" width="0.8" height="1.1" fill="#3f668e"/>
<rect x="10.6" y="54.9" width="5.6" height="1.1" fill="#3f668e"/>
<rect x="17.0" y="54.9" width="3.2" height="1.1" fill="#406689"/>
<rect x="20.2" y="54.9" width="0.8" height="1.1" fill="#446675"/>
<rect x="21.0" y="54.9" width="2.4" height="1.1" fill="#406689"/>
<rect x="23.4" y="54.9" width="0.8" height="1.1" fill="#405a8e"/>
<rect x="24.2" y="54.9" width="2.4" height="1.1" fill="#3f668e"/>
<rect x="26.6" y="54.9" width="0.8" height="1.1" fill="#405a8e"/>
<rect x="27.4" y="54.9" width="0.8" height="1.1" fill="#3f668e"/>
<rect x="29.0" y="54.9" width="2.4" height="1.1" fill="#406689"/>
<rect x="31.4" y="54.9" width="0.8" height="1.1" fill="#405a8e"/>
<rect x="32.2" y="54.9" width="2.4" height="1.1" fill="#3f668e"/>
<rect x="34.6" y="54.9" width="0.8" height="1.1" fill="#405a8e"/>
<rect x="35.4" y="54.9" width="0.8" height="1.1" fill="#446675"/>
<rect x="36.2" y="54.9" width="0.8" height="1.1" fill="#3f668e"/>
<rect x="10.6" y="56.4" width="2.4" height="1.1" fill="#3d5c8c"/>
<rect x="13.8" y="56.4" width="0.8" height="1.1" fill="#446675"/>
<rect x="14.6" y="56.4" width="2.4" height="1.1" fill="#305f8e"/>
<rect x="17.8" y="56.4" width="0.8" height="1.1" fill="#3f668e"/>
<rect x="19.4" y="56.4" width="0.8" height="1.1" fill="#3f668e"/>
<rect x="21.0" y="56.4" width="0.8" height="1.1" fill="#3b6589"/>
<rect x="21.8" y="56.4" width="0.8" height="1.1" fill="#3f668e"/>
<rect x="23.4" y="56.4" width="0.8" height="1.1" fill="#3f668e"/>
<rect x="25.0" y="56.4" width="0.8" height="1.1" fill="#3f668e"/>
<rect x="26.6" y="56.4" width="1.6" height="1.1" fill="#3f668e"/>
<rect x="29.0" y="56.4" width="0.8" height="1.1" fill="#3f668e"/>
<rect x="30.6" y="56.4" width="1.6" height="1.1" fill="#3f668e"/>
<rect x="33.0" y="56.4" width="2.4" height="1.1" fill="#3f668e"/>
<rect x="35.4" y="56.4" width="0.8" height="1.1" fill="#446675"/>
<rect x="37.0" y="56.4" width="0.8" height="1.1" fill="#446675"/>
<rect x="13.8" y="58.0" width="5.6" height="1.1" fill="#3f668e"/>
<rect x="20.2" y="58.0" width="0.8" height="1.1" fill="#406689"/>
<rect x="21.0" y="58.0" width="0.8" height="1.1" fill="#405a8e"/>
<rect x="21.8" y="58.0" width="0.8" height="1.1" fill="#3b6589"/>
<rect x="22.6" y="58.0" width="0.8" height="1.1" fill="#405a8e"/>
<rect x="23.4" y="58.0" width="0.8" height="1.1" fill="#3f668e"/>
<rect x="13.8" y="59.5" width="2.4" height="1.1" fill="#3d5c8c"/>
<rect x="17.0" y="59.5" width="0.8" height="1.1" fill="#405a8e"/>
<rect x="17.8" y="59.5" width="2.4" height="1.1" fill="#305f8e"/>
<rect x="21.0" y="59.5" width="0.8" height="1.1" fill="#3f668e"/>
<rect x="22.6" y="59.5" width="0.8" height="1.1" fill="#3f668e"/>
<rect x="24.2" y="59.5" width="0.8" height="1.1" fill="#3b6589"/>
<rect x="25.0" y="59.5" width="0.8" height="1.1" fill="#3f668e"/>
<rect x="26.6" y="59.5" width="0.8" height="1.1" fill="#3f668e"/>
<rect x="28.2" y="59.5" width="0.8" height="1.1" fill="#3f668e"/>
<rect x="29.8" y="59.5" width="2.4" height="1.1" fill="#3f668e"/>
<rect x="33.0" y="59.5" width="0.8" height="1.1" fill="#3f668e"/>
<rect x="34.6" y="59.5" width="0.8" height="1.1" fill="#3b6589"/>
<rect x="35.4" y="59.5" width="0.8" height="1.1" fill="#3f668e"/>
<rect x="37.0" y="59.5" width="2.4" height="1.1" fill="#3f668e"/>
<rect x="39.4" y="59.5" width="0.8" height="1.1" fill="#405a8e"/>
<rect x="41.0" y="59.5" width="0.8" height="1.1" fill="#405a8e"/>
<rect x="17.0" y="61.1" width="5.6" height="1.1" fill="#3f668e"/>
<rect x="23.4" y="61.1" width="0.8" height="1.1" fill="#3f668e"/>
<rect x="25.0" y="61.1" width="0.8" height="1.1" fill="#3f668e"/>
<rect x="26.6" y="61.1" width="3.2" height="1.1" fill="#386693"/>
<rect x="29.8" y="61.1" width="0.8" height="1.1" fill="#285f93"/>
<rect x="30.6" y="61.1" width="0.8" height="1.1" fill="#3f668e"/>
<rect x="32.2" y="61.1" width="0.8" height="1.1" fill="#3f668e"/>
<rect x="33.8" y="61.1" width="0.8" height="1.1" fill="#3f668e"/>
<rect x="34.6" y="61.1" width="0.8" height="1.1" fill="#285f93"/>
<rect x="35.4" y="61.1" width="0.8" height="1.1" fill="#3f668e"/>
<rect x="17.0" y="62.7" width="5.6" height="1.1" fill="#3f668e"/>
<rect x="23.4" y="62.7" width="0.8" height="1.1" fill="#3f668e"/>
<rect x="25.0" y="62.7" width="0.8" height="1.1" fill="#3f668e"/>
<rect x="26.6" y="62.7" width="3.2" height="1.1" fill="#386693"/>
<rect x="29.8" y="62.7" width="0.8" height="1.1" fill="#285f93"/>
<rect x="30.6" y="62.7" width="0.8" height="1.1" fill="#3f668e"/>
<rect x="32.2" y="62.7" width="0.8" height="1.1" fill="#3f668e"/>
<rect x="33.8" y="62.7" width="0.8" height="1.1" fill="#3f668e"/>
<rect x="35.4" y="62.7" width="0.8" height="1.1" fill="#3f668e"/>
<rect x="37.0" y="62.7" width="2.4" height="1.1" fill="#3f668e"/>
<rect x="40.2" y="62.7" width="0.8" height="1.1" fill="#3f668e"/>
<rect x="41.8" y="62.7" width="0.8" height="1.1" fill="#3b6589"/>
<rect x="42.6" y="62.7" width="0.8" height="1.1" fill="#285f93"/>
<rect x="44.2" y="62.7" width="0.8" height="1.1" fill="#3f668e"/>
<rect x="45.8" y="62.7" width="1.6" height="1.1" fill="#3f668e"/>
<rect x="17.0" y="64.2" width="3.2" height="1.1" fill="#386693"/>
<rect x="20.2" y="64.2" width="0.8" height="1.1" fill="#285f93"/>
<rect x="21.0" y="64.2" width="0.8" height="1.1" fill="#3f668e"/>
<rect x="22.6" y="64.2" width="0.8" height="1.1" fill="#3f668e"/>
<rect x="24.2" y="64.2" width="0.8" height="1.1" fill="#3f668e"/>
<rect x="25.0" y="64.2" width="0.8" height="1.1" fill="#285f93"/>
<rect x="26.6" y="64.2" width="0.8" height="1.1" fill="#3f668e"/>
<rect x="28.2" y="64.2" width="0.8" height="1.1" fill="#3f668e"/>
<rect x="29.8" y="64.2" width="0.8" height="1.1" fill="#3f668e"/>
<rect x="31.4" y="64.2" width="1.6" height="1.1" fill="#3f668e"/>
<rect x="17.0" y="65.8" width="3.2" height="1.1" fill="#386693"/>
<rect x="20.2" y="65.8" width="0.8" height="1.1" fill="#285f93"/>
<rect x="21.0" y="65.8" width="0.8" height="1.1" fill="#3f668e"/>
<rect x="22.6" y="65.8" width="0.8" height="1.1" fill="#3f668e"/>
<rect x="24.2" y="65.8" width="0.8" height="1.1" fill="#3f668e"/>
<rect x="25.8" y="65.8" width="0.8" height="1.1" fill="#3f668e"/>
<rect x="27.4" y="65.8" width="2.4" height="1.1" fill="#3f668e"/>
<rect x="30.6" y="65.8" width="0.8" height="1.1" fill="#3f668e"/>
<rect x="32.2" y="65.8" width="0.8" height="1.1" fill="#3b6589"/>
<rect x="33.0" y="65.8" width="0.8" height="1.1" fill="#285f93"/>
<rect x="34.6" y="65.8" width="0.8" height="1.1" fill="#3f668e"/>
<rect x="36.2" y="65.8" width="0.8" height="1.1" fill="#3f668e"/>
<rect x="37.8" y="65.8" width="0.8" height="1.1" fill="#3f668e"/>
<rect x="39.4" y="65.8" width="1.6" height="1.1" fill="#3f668e"/>
<rect x="17.0" y="67.3" width="0.8" height="1.1" fill="#3f668e"/>
<rect x="18.6" y="67.3" width="1.6" height="1.1" fill="#3f668e"/>
<rect x="21.0" y="67.3" width="4.0" height="1.1" fill="#3f668e"/>
<rect x="13.8" y="68.9" width="0.8" height="1.1" fill="#405a8e"/>
<rect x="10.6" y="70.5" width="0.8" height="1.1" fill="#446675"/>
<rect x="7.4" y="72.0" width="0.8" height="1.1" fill="#285f93"/>
<rect x="7.4" y="75.1" width="1.6" height="1.1" fill="#3d5c8c"/>
<rect x="9.8" y="75.1" width="0.8" height="1.1" fill="#285f93"/>
<rect x="10.6" y="75.1" width="4.8" height="1.1" fill="#3f668e"/>
<rect x="15.4" y="75.1" width="0.8" height="1.1" fill="#285f93"/>
<rect x="17.0" y="75.1" width="0.8" height="1.1" fill="#285f93"/>
<rect x="10.6" y="76.7" width="2.4" height="1.1" fill="#3d5c8c"/>
<rect x="13.8" y="76.7" width="0.8" height="1.1" fill="#446675"/>
<rect x="14.6" y="76.7" width="6.4" height="1.1" fill="#3f668e"/>
<rect x="21.8" y="76.7" width="0.8" height="1.1" fill="#3f668e"/>
<rect x="23.4" y="76.7" width="0.8" height="1.1" fill="#3f668e"/>
<rect x="25.0" y="76.7" width="3.2" height="1.1" fill="#3f668e"/>
<rect x="28.2" y="76.7" width="0.8" height="1.1" fill="#446675"/>
<rect x="29.8" y="76.7" width="0.8" height="1.1" fill="#446675"/>
<rect x="13.8" y="78.2" width="0.8" height="1.1" fill="#3f668e"/>
<rect x="15.4" y="78.2" width="1.6" height="1.1" fill="#3f668e"/>
<rect x="17.8" y="78.2" width="1.6" height="1.1" fill="#3f668e"/>
<rect x="10.6" y="79.8" width="0.8" height="1.1" fill="#446675"/>
<rect x="7.4" y="81.4" width="0.8" height="1.1" fill="#285f93"/>
<rect x="4.2" y="82.9" width="0.8" height="1.1" fill="#405a8e"/>
<rect x="1.0" y="84.5" width="0.8" height="1.1" fill="#446675"/>
<rect x="1.0" y="87.6" width="1.6" height="1.1" fill="#4d6a40"/>
<rect x="3.4" y="87.6" width="9.6" height="1.1" fill="#4d6a40"/>
<rect x="1.0" y="89.2" width="4.0" height="1.1" fill="#416c90"/>
<rect x="5.8" y="89.2" width="12.8" height="1.1" fill="#3c8878"/>
<rect x="19.4" y="89.2" width="0.8" height="1.1" fill="#a9910b"/>
<rect x="1.0" y="90.7" width="5.6" height="1.1" fill="#416c90"/>
<rect x="4.2" y="92.3" width="1.6" height="1.1" fill="#4d6a40"/>
<rect x="6.6" y="92.3" width="6.4" height="1.1" fill="#4d6a40"/>
<rect x="4.2" y="93.9" width="12.8" height="1.1" fill="#949475"/>
<rect x="17.0" y="93.9" width="0.8" height="1.1" fill="#925190"/>
<rect x="17.8" y="93.9" width="4.0" height="1.1" fill="#416c90"/>
<rect x="22.6" y="93.9" width="4.8" height="1.1" fill="#3c8878"/>
<rect x="27.4" y="93.9" width="0.8" height="1.1" fill="#8f8f8f"/>
<rect x="28.2" y="93.9" width="4.8" height="1.1" fill="#416c90"/>
<rect x="33.0" y="93.9" width="0.8" height="1.1" fill="#8f8f8f"/>
<rect x="33.8" y="93.9" width="0.8" height="1.1" fill="#416c90"/>
<rect x="35.4" y="93.9" width="4.8" height="1.1" fill="#6c94a9"/>
<rect x="40.2" y="93.9" width="0.8" height="1.1" fill="#925190"/>
<rect x="41.8" y="93.9" width="0.8" height="1.1" fill="#925190"/>
<rect x="7.4" y="95.4" width="2.4" height="1.1" fill="#416c90"/>
<rect x="10.6" y="95.4" width="0.8" height="1.1" fill="#6c94a9"/>
<rect x="12.2" y="95.4" width="0.8" height="1.1" fill="#8f8f8f"/>
<rect x="13.8" y="95.4" width="4.8" height="1.1" fill="#6c94a9"/>
<rect x="18.6" y="95.4" width="0.8" height="1.1" fill="#8f8f8f"/>
<rect x="19.4" y="95.4" width="3.2" height="1.1" fill="#949475"/>
<rect x="22.6" y="95.4" width="0.8" height="1.1" fill="#1a6ea9"/>
<rect x="23.4" y="95.4" width="0.8" height="1.1" fill="#1a6ea9"/>
<rect x="24.2" y="95.4" width="0.8" height="1.1" fill="#8f8f8f"/>
<rect x="7.4" y="97.0" width="3.2" height="1.1" fill="#6c94a9"/>
<rect x="10.6" y="97.0" width="0.8" height="1.1" fill="#8f8f8f"/>
<rect x="11.4" y="97.0" width="4.8" height="1.1" fill="#949475"/>
<rect x="16.2" y="97.0" width="0.8" height="1.1" fill="#1a6ea9"/>
<rect x="17.0" y="97.0" width="0.8" height="1.1" fill="#6c94a9"/>
<rect x="17.8" y="97.0" width="0.8" height="1.1" fill="#1a6ea9"/>
<rect x="18.6" y="97.0" width="0.8" height="1.1" fill="#8f8f8f"/>
<rect x="7.4" y="98.5" width="2.4" height="1.1" fill="#855e82"/>
<rect x="10.6" y="98.5" width="0.8" height="1.1" fill="#1a6ea9"/>
<rect x="11.4" y="98.5" width="2.4" height="1.1" fill="#416c90"/>
<rect x="14.6" y="98.5" width="0.8" height="1.1" fill="#6c94a9"/>
<rect x="16.2" y="98.5" width="0.8" height="1.1" fill="#8f8f8f"/>
<rect x="17.8" y="98.5" width="0.8" height="1.1" fill="#7c8b73"/>
<rect x="18.6" y="98.5" width="0.8" height="1.1" fill="#8f8f8f"/>
<rect x="20.2" y="98.5" width="0.8" height="1.1" fill="#6c94a9"/>
<rect x="21.8" y="98.5" width="0.8" height="1.1" fill="#8f8f8f"/>
<rect x="23.4" y="98.5" width="0.8" height="1.1" fill="#6c94a9"/>
<rect x="24.2" y="98.5" width="0.8" height="1.1" fill="#8f8f8f"/>
<rect x="25.8" y="98.5" width="1.6" height="1.1" fill="#8f8f8f"/>
<rect x="27.4" y="98.5" width="0.8" height="1.1" fill="#6c94a9"/>
<rect x="28.2" y="98.5" width="0.8" height="1.1" fill="#1a6ea9"/>
<rect x="29.8" y="98.5" width="0.8" height="1.1" fill="#1a6ea9"/>
<rect x="10.6" y="100.1" width="3.2" height="1.1" fill="#6c94a9"/>
<rect x="13.8" y="100.1" width="0.8" height="1.1" fill="#a9910b"/>
<rect x="14.6" y="100.1" width="0.8" height="1.1" fill="#6c94a9"/>
<rect x="15.4" y="100.1" width="0.8" height="1.1" fill="#a9910b"/>
<rect x="17.0" y="100.1" width="0.8" height="1.1" fill="#8f8f8f"/>
<rect x="18.6" y="100.1" width="5.6" height="1.1" fill="#3c8878"/>
<rect x="24.2" y="100.1" width="0.8" height="1.1" fill="#a9910b"/>
<rect x="25.0" y="100.1" width="4.8" height="1.1" fill="#6c94a9"/>
<rect x="29.8" y="100.1" width="0.8" height="1.1" fill="#925190"/>
<rect x="30.6" y="100.1" width="0.8" height="1.1" fill="#6c94a9"/>
<rect x="31.4" y="100.1" width="0.8" height="1.1" fill="#925190"/>
<rect x="32.2" y="100.1" width="0.8" height="1.1" fill="#8f8f8f"/>
<rect x="33.8" y="100.1" width="0.8" height="1.1" fill="#7c8b73"/>
<rect x="34.6" y="100.1" width="0.8" height="1.1" fill="#a9910b"/>
<rect x="35.4" y="100.1" width="0.8" height="1.1" fill="#8f8f8f"/>
<rect x="7.4" y="101.7" width="0.8" height="1.1" fill="#1a6ea9"/>
<rect x="4.2" y="103.2" width="0.8" height="1.1" fill="#925190"/>
<rect x="4.2" y="106.3" width="1.6" height="1.1" fill="#4d6a40"/>
<rect x="6.6" y="106.3" width="11.2" height="1.1" fill="#4d6a40"/>
<rect x="4.2" y="107.9" width="3.2" height="1.1" fill="#416c90"/>
<rect x="8.2" y="107.9" width="5.6" height="1.1" fill="#949475"/>
<rect x="13.8" y="107.9" width="1.6" height="1.1" fill="#8f8f8f"/>
<rect x="16.2" y="107.9" width="0.8" height="1.1" fill="#8f8f8f"/>
<rect x="7.4" y="109.5" width="2.4" height="1.1" fill="#3c8878"/>
<rect x="9.8" y="109.5" width="1.6" height="1.1" fill="#8f8f8f"/>
<rect x="11.4" y="109.5" width="2.4" height="1.1" fill="#949475"/>
<rect x="13.8" y="109.5" width="4.8" height="1.1" fill="#8f8f8f"/>
<rect x="19.4" y="109.5" width="4.0" height="1.1" fill="#416c90"/>
<rect x="23.4" y="109.5" width="1.6" height="1.1" fill="#8f8f8f"/>
<rect x="4.2" y="111.0" width="0.8" height="1.1" fill="#8f8f8f"/>
<rect x="4.2" y="114.1" width="1.6" height="1.1" fill="#4d6a40"/>
<rect x="6.6" y="114.1" width="12.8" height="1.1" fill="#4d6a40"/>
<rect x="4.2" y="115.7" width="3.2" height="1.1" fill="#416c90"/>
<rect x="8.2" y="115.7" width="5.6" height="1.1" fill="#949475"/>
<rect x="13.8" y="115.7" width="1.6" height="1.1" fill="#8f8f8f"/>
<rect x="16.2" y="115.7" width="0.8" height="1.1" fill="#8f8f8f"/>
<rect x="7.4" y="117.2" width="2.4" height="1.1" fill="#3c8878"/>
<rect x="9.8" y="117.2" width="1.6" height="1.1" fill="#8f8f8f"/>
<rect x="11.4" y="117.2" width="2.4" height="1.1" fill="#949475"/>
<rect x="13.8" y="117.2" width="4.8" height="1.1" fill="#8f8f8f"/>
<rect x="19.4" y="117.2" width="3.2" height="1.1" fill="#416c90"/>
<rect x="22.6" y="117.2" width="1.6" height="1.1" fill="#8f8f8f"/>
<rect x="4.2" y="118.8" width="0.8" height="1.1" fill="#8f8f8f"/>
<rect x="4.2" y="121.9" width="1.6" height="1.1" fill="#4d6a40"/>
<rect x="6.6" y="121.9" width="9.6" height="1.1" fill="#4d6a40"/>
<rect x="4.2" y="123.5" width="4.0" height="1.1" fill="#416c90"/>
<rect x="9.0" y="123.5" width="4.8" height="1.1" fill="#3c8878"/>
<rect x="13.8" y="123.5" width="0.8" height="1.1" fill="#8f8f8f"/>
<rect x="14.6" y="123.5" width="5.6" height="1.1" fill="#3c8878"/>
<rect x="20.2" y="123.5" width="1.6" height="1.1" fill="#8f8f8f"/>
<rect x="22.6" y="123.5" width="5.6" height="1.1" fill="#949475"/>
<rect x="28.2" y="123.5" width="1.6" height="1.1" fill="#8f8f8f"/>
<rect x="30.6" y="123.5" width="4.0" height="1.1" fill="#416c90"/>
<rect x="35.4" y="123.5" width="0.8" height="1.1" fill="#8f8f8f"/>
<rect x="7.4" y="125.1" width="4.8" height="1.1" fill="#855e82"/>
<rect x="13.0" y="125.1" width="4.0" height="1.1" fill="#8f8f8f"/>
<rect x="4.2" y="126.6" width="0.8" height="1.1" fill="#8f8f8f"/>
<rect x="4.2" y="129.7" width="1.6" height="1.1" fill="#4d6a40"/>
<rect x="6.6" y="129.7" width="6.4" height="1.1" fill="#4d6a40"/>
<rect x="4.2" y="131.3" width="3.2" height="1.1" fill="#416c90"/>
<rect x="8.2" y="131.3" width="4.0" height="1.1" fill="#949475"/>
<rect x="12.2" y="131.3" width="1.6" height="1.1" fill="#8f8f8f"/>
<rect x="14.6" y="131.3" width="4.0" height="1.1" fill="#416c90"/>
<rect x="19.4" y="131.3" width="0.8" height="1.1" fill="#8f8f8f"/>
<rect x="7.4" y="132.8" width="2.4" height="1.1" fill="#855e82"/>
<rect x="10.6" y="132.8" width="0.8" height="1.1" fill="#8f8f8f"/>
<rect x="11.4" y="132.8" width="4.0" height="1.1" fill="#416c90"/>
<rect x="16.2" y="132.8" width="3.2" height="1.1" fill="#416c90"/>
<rect x="19.4" y="132.8" width="0.8" height="1.1" fill="#8f8f8f"/>
<rect x="21.0" y="132.8" width="0.8" height="1.1" fill="#8f8f8f"/>
<rect x="22.6" y="132.8" width="0.8" height="1.1" fill="#8f8f8f"/>
<rect x="24.2" y="132.8" width="4.0" height="1.1" fill="#8f8f8f"/>
<rect x="29.0" y="132.8" width="0.8" height="1.1" fill="#8f8f8f"/>
<rect x="10.6" y="134.4" width="3.2" height="1.1" fill="#8f8f8f"/>
<rect x="14.6" y="134.4" width="1.6" height="1.1" fill="#8f8f8f"/>
<rect x="17.0" y="134.4" width="1.6" height="1.1" fill="#8f8f8f"/>
<rect x="18.6" y="134.4" width="3.2" height="1.1" fill="#949475"/>
<rect x="21.8" y="134.4" width="1.6" height="1.1" fill="#8f8f8f"/>
<rect x="24.2" y="134.4" width="1.6" height="1.1" fill="#8f8f8f"/>
<rect x="26.6" y="134.4" width="0.8" height="1.1" fill="#8b6556"/>
<rect x="28.2" y="134.4" width="0.8" height="1.1" fill="#8b6556"/>
<rect x="29.8" y="134.4" width="0.8" height="1.1" fill="#8b6556"/>
<rect x="31.4" y="134.4" width="1.6" height="1.1" fill="#8f8f8f"/>
<rect x="33.8" y="134.4" width="1.6" height="1.1" fill="#8f8f8f"/>
<rect x="35.4" y="134.4" width="3.2" height="1.1" fill="#949475"/>
<rect x="38.6" y="134.4" width="1.6" height="1.1" fill="#8f8f8f"/>
<rect x="41.0" y="134.4" width="1.6" height="1.1" fill="#8f8f8f"/>
<rect x="43.4" y="134.4" width="2.4" height="1.1" fill="#8b6556"/>
<rect x="46.6" y="134.4" width="1.6" height="1.1" fill="#8f8f8f"/>
<rect x="49.0" y="134.4" width="4.0" height="1.1" fill="#8f8f8f"/>
<rect x="7.4" y="136.0" width="0.8" height="1.1" fill="#8f8f8f"/>
<rect x="4.2" y="137.5" width="0.8" height="1.1" fill="#8f8f8f"/>
<rect x="1.0" y="140.7" width="6.4" height="1.1" fill="#416c90"/>
<rect x="4.2" y="142.2" width="4.8" height="1.1" fill="#3c8878"/>
<rect x="9.0" y="142.2" width="0.8" height="1.1" fill="#8f8f8f"/>
<rect x="9.8" y="142.2" width="5.6" height="1.1" fill="#3c8878"/>
<rect x="15.4" y="142.2" width="0.8" height="1.1" fill="#8f8f8f"/>
<rect x="17.0" y="142.2" width="4.0" height="1.1" fill="#8f8f8f"/>
<rect x="1.0" y="143.8" width="1.6" height="1.1" fill="#8f8f8f"/>
<rect x="1.0" y="146.9" width="1.6" height="1.1" fill="#4d6a40"/>
<rect x="3.4" y="146.9" width="4.8" height="1.1" fill="#4d6a40"/>
<rect x="1.0" y="148.5" width="2.4" height="1.1" fill="#416c90"/>
<rect x="4.2" y="148.5" width="3.2" height="1.1" fill="#949475"/>
<rect x="7.4" y="148.5" width="1.6" height="1.1" fill="#8f8f8f"/>
<rect x="9.8" y="148.5" width="0.8" height="1.1" fill="#8f8f8f"/>
<rect x="4.2" y="150.0" width="1.6" height="1.1" fill="#4d6a40"/>
<rect x="6.6" y="150.0" width="9.6" height="1.1" fill="#4d6a40"/>
<rect x="4.2" y="151.6" width="4.8" height="1.1" fill="#3c8878"/>
<rect x="9.0" y="151.6" width="0.8" height="1.1" fill="#8f8f8f"/>
<rect x="9.8" y="151.6" width="4.8" height="1.1" fill="#416c90"/>
<rect x="14.6" y="151.6" width="0.8" height="1.1" fill="#8f8f8f"/>
<rect x="16.2" y="151.6" width="4.8" height="1.1" fill="#8f8f8f"/>
<rect x="21.8" y="151.6" width="0.8" height="1.1" fill="#8f8f8f"/>
<rect x="23.4" y="151.6" width="0.8" height="1.1" fill="#8f8f8f"/>
<rect x="24.2" y="151.6" width="1.6" height="1.1" fill="#7c8b73"/>
<rect x="26.6" y="151.6" width="1.6" height="1.1" fill="#7c8b73"/>
<rect x="29.0" y="151.6" width="1.6" height="1.1" fill="#7c8b73"/>
<rect x="31.4" y="151.6" width="1.6" height="1.1" fill="#7c8b73"/>
<rect x="33.8" y="151.6" width="1.6" height="1.1" fill="#7c8b73"/>
<rect x="36.2" y="151.6" width="1.6" height="1.1" fill="#7c8b73"/>
<rect x="38.6" y="151.6" width="1.6" height="1.1" fill="#7c8b73"/>
<rect x="41.0" y="151.6" width="0.8" height="1.1" fill="#7c8b73"/>
<rect x="41.8" y="151.6" width="1.6" height="1.1" fill="#8f8f8f"/>
<rect x="4.2" y="153.1" width="12.8" height="1.1" fill="#3c8878"/>
<rect x="17.8" y="153.1" width="8.8" height="1.1" fill="#8f8f8f"/>
<rect x="4.2" y="156.2" width="1.6" height="1.1" fill="#4d6a40"/>
<rect x="6.6" y="156.2" width="6.4" height="1.1" fill="#4d6a40"/>
<rect x="4.2" y="157.8" width="2.4" height="1.1" fill="#8f8f8f"/>
<rect x="6.6" y="157.8" width="5.6" height="1.1" fill="#949475"/>
<rect x="12.2" y="157.8" width="2.4" height="1.1" fill="#8f8f8f"/>
<rect x="4.2" y="159.4" width="3.2" height="1.1" fill="#8f8f8f"/>
<rect x="8.2" y="159.4" width="1.6" height="1.1" fill="#8f8f8f"/>
<rect x="10.6" y="159.4" width="3.2" height="1.1" fill="#8b6556"/>
<rect x="14.6" y="159.4" width="6.4" height="1.1" fill="#8b6556"/>
<rect x="21.8" y="159.4" width="1.6" height="1.1" fill="#8f8f8f"/>
<rect x="24.2" y="159.4" width="4.0" height="1.1" fill="#8f8f8f"/>
<rect x="4.2" y="160.9" width="2.4" height="1.1" fill="#8f8f8f"/>
<rect x="6.6" y="160.9" width="4.0" height="1.1" fill="#949475"/>
<rect x="10.6" y="160.9" width="2.4" height="1.1" fill="#8f8f8f"/>
<rect x="4.2" y="164.1" width="1.6" height="1.1" fill="#4d6a40"/>
<rect x="6.6" y="164.1" width="6.4" height="1.1" fill="#4d6a40"/>
<rect x="4.2" y="165.6" width="2.4" height="1.1" fill="#8f8f8f"/>
<rect x="6.6" y="165.6" width="5.6" height="1.1" fill="#949475"/>
<rect x="12.2" y="165.6" width="2.4" height="1.1" fill="#8f8f8f"/>
<rect x="4.2" y="167.2" width="3.2" height="1.1" fill="#8f8f8f"/>
<rect x="8.2" y="167.2" width="1.6" height="1.1" fill="#8f8f8f"/>
<rect x="10.6" y="167.2" width="4.0" height="1.1" fill="#8b6556"/>
<rect x="15.4" y="167.2" width="6.4" height="1.1" fill="#8b6556"/>
<rect x="22.6" y="167.2" width="1.6" height="1.1" fill="#8f8f8f"/>
<rect x="25.0" y="167.2" width="4.0" height="1.1" fill="#8f8f8f"/>
<rect x="4.2" y="168.7" width="2.4" height="1.1" fill="#8f8f8f"/>
<rect x="6.6" y="168.7" width="4.0" height="1.1" fill="#949475"/>
<rect x="10.6" y="168.7" width="2.4" height="1.1" fill="#8f8f8f"/>
<rect x="4.2" y="171.8" width="4.8" height="1.1" fill="#855e82"/>
<rect x="9.8" y="171.8" width="0.8" height="1.1" fill="#7c8b73"/>
<rect x="10.6" y="171.8" width="0.8" height="1.1" fill="#8f8f8f"/>
<rect x="1.0" y="173.4" width="0.8" height="1.1" fill="#8f8f8f"/>
</svg>
<div class="abs" style="left:1102px;top:58px;width:1px;height:797px;background:#2b2b2b"></div>
<div class="abs" style="left:1103px;top:220px;width:14px;height:186px;background:#434343"></div>
<div class="abs" style="left:1103px;top:341px;width:14px;height:2px;background:#a0a0a0"></div>
  <div id="tabs">
    <div class="tab" style="left:0;width:129px;">
      <svg class="abs" style="left:11px;top:11px" width="13" height="13" viewBox="0 0 16 16"><path fill="#3b98d0" d="M7.900 1C5.700 1 4.700 1.900 4.700 3.200v1.600h3.400v.6H3.200C1.900 5.400 1 6.500 1 8.200s.8 2.700 2.100 2.700h1.300V9.100c0-1.300 1.100-2.300 2.400-2.300h3.100c1.100 0 1.900-.9 1.900-2V3.200C11.800 1.900 10.300 1 7.900 1zM6 2.200a.7.700 0 110 1.400.7.700 0 010-1.400z"/><path fill="#3b98d0" d="M8.100 15c2.200 0 3.200-.9 3.200-2.200v-1.600H7.900v-.6h4.900c1.300 0 2.200-1.100 2.200-2.800s-.8-2.700-2.100-2.700h-1.300v1.800c0 1.300-1.100 2.300-2.400 2.300H6.100c-1.100 0-1.900.9-1.900 2v1.600C4.200 14.100 5.700 15 8.100 15zm1.900-1.200a.7.700 0 110-1.400.7.700 0 010 1.400z"/></svg>
      <div class="abs" id="tb1" style="left:31px;top:0">代码补全.py</div>
    </div>
    <div class="tab on" style="left:129px;width:148px;">
      <svg class="abs" style="left:13px;top:11px" width="12" height="12" viewBox="0 0 16 16"><path fill="none" stroke="#519aba" stroke-width="2.600" d="M10.500 3.200A5.400 5.400 0 108 13.400c1 0 1.900-.3 2.600-.8"/><path stroke="#519aba" stroke-width="1.800" d="M10 8h6M13 5v6"/></svg>
      <div class="abs" id="tb2" style="left:32px;top:0">傅里叶变换.cxx</div>
      <svg class="abs" style="left:127px;top:12px" width="11" height="11" viewBox="0 0 11 11"><path d="M1 1l9 9M10 1l-9 9" stroke="#ffffff" stroke-width="1.400"/></svg>
    </div>
    <div class="tab" style="left:277px;width:139px;">
      <svg class="abs" style="left:12px;top:11px" width="13" height="13" viewBox="0 0 16 16"><path fill="#3b98d0" d="M7.900 1C5.700 1 4.700 1.900 4.700 3.200v1.600h3.400v.6H3.200C1.900 5.400 1 6.500 1 8.200s.8 2.700 2.100 2.700h1.300V9.100c0-1.300 1.100-2.300 2.400-2.300h3.100c1.100 0 1.900-.9 1.900-2V3.200C11.800 1.900 10.300 1 7.900 1zM6 2.200a.7.700 0 110 1.400.7.700 0 010-1.400z"/><path fill="#3b98d0" d="M8.100 15c2.200 0 3.200-.9 3.200-2.200v-1.600H7.900v-.6h4.900c1.300 0 2.200-1.100 2.200-2.800s-.8-2.700-2.100-2.700h-1.300v1.800c0 1.300-1.100 2.300-2.400 2.300H6.100c-1.100 0-1.900.9-1.900 2v1.600C4.200 14.100 5.700 15 8.100 15zm1.900-1.200a.7.700 0 110-1.400.7.700 0 010 1.400z"/></svg>
      <div class="abs" id="tb3" style="left:31px;top:0">流程图生成.py</div>
    </div>
    <!-- editor actions -->
    <svg class="abs" style="left:994px;top:9px" width="18" height="18" viewBox="0 0 18 18"><g fill="none" stroke="#cccccc" stroke-width="1.300" stroke-linejoin="round"><path d="M5.500 8V2.500l10 6.500-10 6.500"/><rect x="1" y="11" width="5" height="5" rx="1.500"/><path d="M3.500 11V9.500"/></g></svg>
    <svg class="abs" style="left:1016px;top:15px" width="9" height="7" viewBox="0 0 9 7"><path d="M.8 1.200 4.500 5l3.700-3.800" fill="none" stroke="#cccccc" stroke-width="1.200"/></svg>
    <svg class="abs" style="left:1033px;top:10px" width="16" height="16" viewBox="0 0 24 24"><g fill="none" stroke="#cccccc" stroke-width="2" stroke-linejoin="round"><circle cx="12" cy="12" r="3"/><path d="M10.300 2.500h3.400l.5 2.700 1.800.8 2.300-1.600 2.400 2.400-1.600 2.300.8 1.800 2.700.5v3.400l-2.700.5-.8 1.800 1.600 2.300-2.400 2.400-2.300-1.600-1.800.8-.5 2.700h-3.400l-.5-2.700-1.800-.8-2.300 1.600-2.400-2.400 1.600-2.300-.8-1.800-2.700-.5v-3.400l2.700-.5.8-1.800-1.600-2.300 2.400-2.400 2.300 1.600 1.800-.8z"/></g></svg>
    <svg class="abs" style="left:1059px;top:10px" width="16" height="16" viewBox="0 0 16 16"><rect x="1.600" y="2.200" width="12.800" height="11.600" rx="1.500" fill="none" stroke="#cccccc" stroke-width="1.300"/><path d="M8 2.200v11.600" stroke="#cccccc" stroke-width="1.300"/></svg>
    <svg class="abs" style="left:1086px;top:16px" width="16" height="4" viewBox="0 0 16 4"><g fill="#cccccc"><circle cx="2" cy="2" r="1.200"/><circle cx="8" cy="2" r="1.200"/><circle cx="14" cy="2" r="1.200"/></g></svg>

  </div>
  <div id="bc">
    <svg class="abs" style="left:21px;top:6px" width="10" height="10" viewBox="0 0 16 16"><path fill="none" stroke="#519aba" stroke-width="2.600" d="M10.500 3.200A5.400 5.400 0 108 13.400c1 0 1.900-.3 2.600-.8"/><path stroke="#519aba" stroke-width="1.800" d="M10 8h6M13 5v6"/></svg>
    <div class="abs" id="bc1" style="left:38px;top:0">傅里叶变换.cxx</div>
    <svg class="abs" style="left:129px;top:7px" width="7" height="9" viewBox="0 0 7 9"><path d="M1 .5l4.500 4L1 8.500" fill="none" stroke="#a9a9a9" stroke-width="1.200"/></svg>
    <div class="abs" id="bc2" style="left:141px;top:0;font-size:14px;color:#cccccc;letter-spacing:2px">{}</div>
    <div class="abs" id="bc3" style="left:159px;top:0;font-size:12px;transform:scaleX(.82);transform-origin:0 0">FFT</div>

  </div>
</div>

<!-- ================= STATUS BAR ================= -->
<div id="status">
  <div class="si" style="left:0;width:35px;background:#0078d4;">
    <svg class="abs" style="left:13px;top:3.500px" width="10" height="13" viewBox="0 0 10 13"><path d="M.5 4 4.500 7.800.5 12M9.500.5 5.800 4.500l3.700 4" fill="none" stroke="#ffffff" stroke-width="1.300"/></svg>
  </div>
  <svg class="abs" style="left:41px;top:2.500px" width="15" height="15" viewBox="0 0 16 16"><g fill="none" stroke="#d0d0d0" stroke-width="1.600" stroke-linejoin="round"><path d="M14.500 1.500c-4 0-7 2-9 6l3 3c4-2 6-5 6-9zM5.500 7.500l-3 .5-1 2 2.500.5M8.500 10.500l-.5 3-2 1-.5-2.500M2 14l2-2"/><circle cx="10.500" cy="5.500" r="1.200"/></g></svg>
  <svg class="abs" style="left:57px;top:2.500px" width="15" height="15" viewBox="0 0 16 16"><g fill="none" stroke="#d0d0d0" stroke-width="1.700"><path d="M7 9.500 9.500 7M6.500 6.500l-3 3a2.100 2.100 0 003 3l1.500-1.500M9.500 9.500l3-3a2.100 2.100 0 00-3-3L8 5"/></g></svg>
  <div class="si" id="s1" style="left:73px">Launchpad</div>
  <svg class="abs" style="left:147px;top:3px" width="14" height="14" viewBox="0 0 14 14"><g fill="none" stroke="#d0d0d0" stroke-width="1.400"><circle cx="7" cy="7" r="6"/><path d="M4.500 4.500l5 5M9.500 4.500l-5 5"/></g></svg>
  <div class="si" id="s2" style="left:164px">0</div>
  <svg class="abs" style="left:175px;top:3px" width="14" height="14" viewBox="0 0 14 14"><g fill="none" stroke="#d0d0d0" stroke-width="1.400" stroke-linejoin="round"><path d="M7 1.500 13 12.500H1z"/><path d="M7 5.500v4M7 10.300v1.200"/></g></svg>
  <div class="si" id="s3" style="left:192px">0</div>

  <div class="si" id="s4" style="left:1105px">行 55，列 2 (已选择1177)</div>
  <div class="si" id="s5" style="left:1255px">空格: 4</div>
  <div class="si" id="s6" style="left:1308px;transform:scaleX(.93);transform-origin:0 0">UTF-8</div>
  <div class="si" id="s7" style="left:1356px;transform:scaleX(.85);transform-origin:0 0">CRLF</div>
  <div class="si" id="s8a" style="left:1396px;font-size:13px;letter-spacing:2px;line-height:18px">{}</div><div class="si" id="s8" style="left:1417px">C++</div>
  <div class="si" id="s9" style="left:1454px">Win32</div>
  <div class="si" style="left:1496px;width:34px;background:#7a6400;">
    <svg class="abs" style="left:10px;top:3px" width="14" height="14" viewBox="0 0 14 14"><g fill="none" stroke="#ffffff" stroke-width="1.300" stroke-linejoin="round"><path d="M7 1.500 13 12.500H1z"/><path d="M7 5.500v4M7 10.300v1.200"/></g></svg>
  </div>

</div>

</div>
</body>
</html>
